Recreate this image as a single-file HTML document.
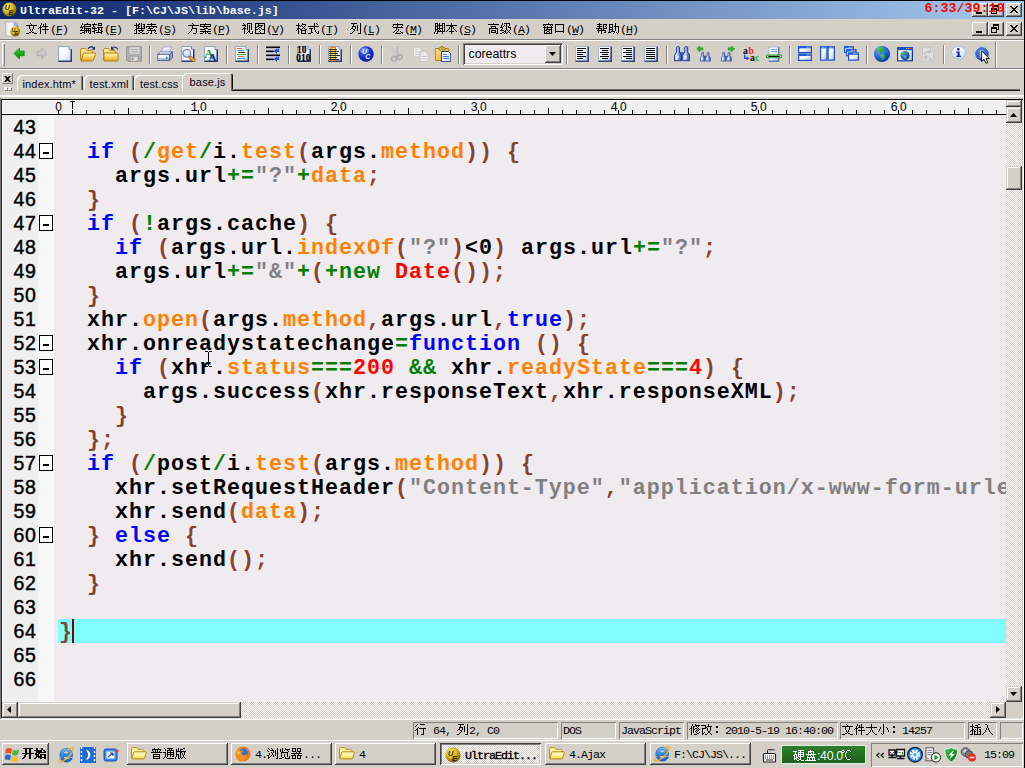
<!DOCTYPE html>
<html lang="zh"><head><meta charset="utf-8"><title>UltraEdit-32 - [F:\CJ\JS\lib\base.js]</title>
<style>
html,body{margin:0;padding:0}
body{width:1025px;height:768px;overflow:hidden;position:relative;background:#d4d0c8;font-family:"Liberation Sans",sans-serif}
div,span.t,svg.a{position:absolute;box-sizing:border-box}
.t{white-space:pre;color:#000}
.m{font-family:"Liberation Mono",monospace}
.s{font-family:"Liberation Sans",sans-serif}
.r{font-family:"Liberation Serif",serif}
.rb{background:#d4d0c8;box-shadow:inset -1px -1px 0 #404040,inset 1px 1px 0 #fff,inset -2px -2px 0 #808080,inset 2px 2px 0 #d4d0c8}
.sb{background:#d4d0c8;box-shadow:inset -1px -1px 0 #404040,inset 1px 1px 0 #d4d0c8,inset -2px -2px 0 #808080,inset 2px 2px 0 #fff}
.rb1{background:#d4d0c8;box-shadow:inset -1px -1px 0 #808080,inset 1px 1px 0 #fff}
.sk{box-shadow:inset 1px 1px 0 #808080,inset -1px -1px 0 #fff}
.chk{background-color:#fff;background-image:linear-gradient(45deg,#d4d0c8 25%,transparent 25%,transparent 75%,#d4d0c8 75%),linear-gradient(45deg,#d4d0c8 25%,transparent 25%,transparent 75%,#d4d0c8 75%);background-size:2px 2px;background-position:0 0,1px 1px}
.vs{width:1px;background:#808080;box-shadow:1px 0 0 #fff}
#code{left:59px;top:115px;width:947px;height:587px;overflow:hidden}
#code .l{left:0;height:24px;width:1400px;white-space:pre;font-family:"Liberation Mono",monospace;font-weight:bold;font-size:21.66px;letter-spacing:1px;line-height:24px;color:#000}
.K{color:#0000ff}.B{color:#88402f}.O{color:#ff8000}.G{color:#008000}.S{color:#808080}.R{color:#ff0000}
.ln{font-family:"Liberation Sans",sans-serif;font-size:19.5px;line-height:24px;letter-spacing:.6px;-webkit-text-stroke:.45px #000;left:13.6px;height:24px;white-space:pre;color:#000}
.fb{left:39px;width:14px;height:16px;border:1px solid #000;background:#fff}
.fb i{position:absolute;left:3px;top:8px;width:6px;height:2px;background:#000}
</style></head><body>
<svg width="0" height="0" style="position:absolute"><defs>
<linearGradient id="gdoc" x1="0" y1="0" x2="1" y2="1"><stop offset="0" stop-color="#fff"/><stop offset=".55" stop-color="#f4f7ff"/><stop offset="1" stop-color="#b8c8ee"/></linearGradient>
<radialGradient id="gblue" cx=".35" cy=".3" r=".8"><stop offset="0" stop-color="#5a7af8"/><stop offset=".6" stop-color="#1428c8"/><stop offset="1" stop-color="#08107a"/></radialGradient>
<radialGradient id="gglobe" cx=".35" cy=".3" r=".8"><stop offset="0" stop-color="#6ab0ff"/><stop offset=".6" stop-color="#1a58d8"/><stop offset="1" stop-color="#0a2a8a"/></radialGradient>
<radialGradient id="gue" cx=".38" cy=".32" r=".75"><stop offset="0" stop-color="#fff37c"/><stop offset=".5" stop-color="#d8b212"/><stop offset=".85" stop-color="#8a6c04"/><stop offset="1" stop-color="#4a3a00"/></radialGradient>
<linearGradient id="gbin" x1="0" y1="0" x2="1" y2="0"><stop offset="0" stop-color="#a9bff0"/><stop offset=".3" stop-color="#e6edfc"/><stop offset=".65" stop-color="#6c8bdc"/><stop offset="1" stop-color="#2c4aa8"/></linearGradient>
<linearGradient id="ginfo" x1="0" y1="0" x2="0" y2="1"><stop offset="0" stop-color="#fff"/><stop offset="1" stop-color="#b8d4f4"/></linearGradient>
<linearGradient id="gfold" x1="0" y1="0" x2="0" y2="1"><stop offset="0" stop-color="#fff0a0"/><stop offset="1" stop-color="#e8b830"/></linearGradient>
<linearGradient id="gie" x1="0" y1="0" x2="0" y2="1"><stop offset="0" stop-color="#6fc3ff"/><stop offset=".5" stop-color="#2a8bea"/><stop offset="1" stop-color="#1258c4"/></linearGradient>
<linearGradient id="gfold3" x1="0" y1="0" x2="0" y2="1"><stop offset="0" stop-color="#fffbd0"/><stop offset=".6" stop-color="#fdee8e"/><stop offset="1" stop-color="#f2cf4a"/></linearGradient>
<linearGradient id="gmdoc" x1="0" y1="0" x2="1" y2="0"><stop offset="0" stop-color="#dcdcdc"/><stop offset=".35" stop-color="#fff"/><stop offset="1" stop-color="#d0d0d0"/></linearGradient>
<linearGradient id="gshield" x1="0" y1="0" x2="1" y2="1"><stop offset="0" stop-color="#4fc85a"/><stop offset=".5" stop-color="#239a34"/><stop offset="1" stop-color="#0f6a1e"/></linearGradient>
<linearGradient id="gfold2" x1="0" y1="0" x2="0" y2="1"><stop offset="0" stop-color="#fff6b8"/><stop offset=".5" stop-color="#fbd765"/><stop offset="1" stop-color="#e2a01e"/></linearGradient>
<linearGradient id="ggreen" x1="0" y1="0" x2="0" y2="1"><stop offset="0" stop-color="#4fd84f"/><stop offset=".5" stop-color="#19a919"/><stop offset="1" stop-color="#0c8a0c"/></linearGradient>
<linearGradient id="ggray" x1="0" y1="0" x2="0" y2="1"><stop offset="0" stop-color="#dadada"/><stop offset="1" stop-color="#b2b2b2"/></linearGradient>
<linearGradient id="gprn" x1="0" y1="0" x2="1" y2="1"><stop offset="0" stop-color="#fff"/><stop offset=".6" stop-color="#f2f5fc"/><stop offset="1" stop-color="#c3cfee"/></linearGradient>
<radialGradient id="glens" cx=".4" cy=".35" r=".7"><stop offset="0" stop-color="#f2fbff"/><stop offset="1" stop-color="#a9d8fb"/></radialGradient>
<linearGradient id="gclip" x1="0" y1="0" x2="1" y2="1"><stop offset="0" stop-color="#ffe68a"/><stop offset=".6" stop-color="#efbe3a"/><stop offset="1" stop-color="#c98f12"/></linearGradient>
<linearGradient id="gsheet" x1="0" y1="0" x2="1" y2="1"><stop offset="0" stop-color="#fff"/><stop offset=".5" stop-color="#f3f6fd"/><stop offset="1" stop-color="#9fb1dc"/></linearGradient>
<linearGradient id="gwin" x1="0" y1="0" x2="1" y2="1"><stop offset="0" stop-color="#fff"/><stop offset=".5" stop-color="#f4f4f6"/><stop offset="1" stop-color="#b9bccb"/></linearGradient>
<linearGradient id="gland" x1="0" y1="0" x2="1" y2="1"><stop offset="0" stop-color="#5fe04a"/><stop offset="1" stop-color="#138a23"/></linearGradient>
<radialGradient id="ghelp" cx=".4" cy=".3" r=".8"><stop offset="0" stop-color="#5f8fe6"/><stop offset="1" stop-color="#1e4aa8"/></radialGradient>
</defs></svg>

<div style="left:0px;top:0px;width:1025px;height:1px;background:#000"></div>
<div style="left:0px;top:1px;width:1024px;height:18px;background:linear-gradient(90deg,#0a246a,#a6caf0)"></div>
<svg class="a" style="left:2.3px;top:2.3px" width="15" height="15" viewBox="0 0 16 16"><circle cx="8" cy="8" r="7.500" fill="url(#gue)"/><text x="3" y="8.500" font-family="Liberation Sans" font-style="italic" font-weight="bold" font-size="7.500" fill="#201800">U</text><text x="7" y="13.500" font-family="Liberation Sans" font-style="italic" font-weight="bold" font-size="7.500" fill="#201800">E</text></svg>
<span class="t m" style="left:20px;top:6.06px;font-size:11.66px;line-height:11.66px;color:#fff;font-weight:bold">UltraEdit-32 - [F:\CJ\JS\lib\base.js]</span>
<div class="rb" style="left:972px;top:3px;width:16px;height:14px;"><div style="left:4px;top:9px;width:6px;height:2px;background:#000"></div></div>
<div class="rb" style="left:988px;top:3px;width:16px;height:14px;"><div style="left:5px;top:2px;width:6px;height:6px;border:1px solid #000;border-top-width:2px"></div><div style="left:3px;top:5px;width:6px;height:6px;border:1px solid #000;border-top-width:2px;background:#d4d0c8"></div></div>
<div class="rb" style="left:1006px;top:3px;width:16px;height:14px;"><svg class="a" style="left:4px;top:3px" width="8" height="7" viewBox="0 0 8 7"><path d="M0 0l7 7M1 0l7 7M7 0L0 7M8 0L1 7" stroke="#000" stroke-width="1" shape-rendering="crispEdges" fill="none"/></svg></div>
<span class="t m" style="left:924.5px;top:1.78px;font-size:13.33px;line-height:13.33px;color:#ff0000;font-weight:bold;z-index:5">6:33/39:10</span>
<svg class="a" style="left:4px;top:21px" width="16" height="16" viewBox="0 0 16 16"><path d="M1.500 1h9l3.500 3.500v10.500h-12.500z" fill="url(#gmdoc)" stroke="#b4b4b4" stroke-width=".8"/><path d="M13.500 5v9.800" stroke="#6a6a6a" stroke-width="1.200"/><path d="M10.500 1v3.500h3.500z" fill="#b9b9f2" stroke="#8f8fd2" stroke-width=".7"/><g transform="translate(5.800 5.200) scale(.66)"><circle cx="8" cy="8" r="7.500" fill="url(#gue)"/><text x="3" y="8.500" font-family="Liberation Sans" font-style="italic" font-weight="bold" font-size="7.500" fill="#201800">U</text><text x="7" y="13.500" font-family="Liberation Sans" font-style="italic" font-weight="bold" font-size="7.500" fill="#201800">E</text></g></svg>
<svg class="a" role="img" aria-label="文件" style="left:26px;top:21px" width="26" height="16" shape-rendering="crispEdges"><path fill="#000" d="M4 2h1v1h-1zM5 3h1v1h-1zM0 4h11v1h-11zM3 5h1v1h-1zM7 5h1v1h-1zM3 6h1v1h-1zM7 6h1v1h-1zM3 7h1v1h-1zM7 7h1v1h-1zM4 8h1v1h-1zM6 8h1v1h-1zM4 9h1v1h-1zM6 9h1v1h-1zM5 10h1v1h-1zM3 11h2v1h-2zM6 11h2v1h-2zM0 12h3v1h-3zM8 12h3v1h-3zM15 2h1v1h-1zM19 2h1v1h-1zM15 3h1v1h-1zM17 3h1v1h-1zM19 3h1v1h-1zM14 4h1v1h-1zM17 4h1v1h-1zM19 4h1v1h-1zM14 5h1v1h-1zM16 5h6v1h-6zM13 6h3v1h-3zM19 6h1v1h-1zM12 7h1v1h-1zM14 7h1v1h-1zM19 7h1v1h-1zM14 8h1v1h-1zM16 8h7v1h-7zM14 9h1v1h-1zM19 9h1v1h-1zM14 10h1v1h-1zM19 10h1v1h-1zM14 11h1v1h-1zM19 11h1v1h-1zM14 12h1v1h-1zM19 12h1v1h-1z"/></svg>
<span class="t m" style="left:50px;top:25.06px;font-size:11.66px;line-height:11.66px;letter-spacing:-1px">(<u>F</u>)</span>
<svg class="a" role="img" aria-label="编辑" style="left:80px;top:21px" width="26" height="16" shape-rendering="crispEdges"><path fill="#000" d="M2 2h1v1h-1zM7 2h1v1h-1zM2 3h1v1h-1zM4 3h7v1h-7zM1 4h1v1h-1zM4 4h1v1h-1zM10 4h1v1h-1zM1 5h1v1h-1zM3 5h8v1h-8zM0 6h3v1h-3zM4 6h1v1h-1zM2 7h1v1h-1zM4 7h7v1h-7zM1 8h1v1h-1zM4 8h1v1h-1zM6 8h1v1h-1zM8 8h1v1h-1zM10 8h1v1h-1zM0 9h11v1h-11zM4 10h1v1h-1zM6 10h1v1h-1zM8 10h1v1h-1zM10 10h1v1h-1zM2 11h3v1h-3zM6 11h1v1h-1zM8 11h1v1h-1zM10 11h1v1h-1zM0 12h2v1h-2zM4 12h1v1h-1zM9 12h2v1h-2zM14 2h1v1h-1zM18 2h4v1h-4zM12 3h5v1h-5zM18 3h1v1h-1zM21 3h1v1h-1zM13 4h1v1h-1zM18 4h4v1h-4zM13 5h2v1h-2zM12 6h1v1h-1zM14 6h1v1h-1zM17 6h6v1h-6zM12 7h5v1h-5zM18 7h1v1h-1zM21 7h1v1h-1zM14 8h1v1h-1zM18 8h2v1h-2zM21 8h1v1h-1zM14 9h3v1h-3zM18 9h1v1h-1zM20 9h2v1h-2zM12 10h3v1h-3zM18 10h1v1h-1zM21 10h2v1h-2zM14 11h1v1h-1zM16 11h6v1h-6zM14 12h1v1h-1zM21 12h1v1h-1z"/></svg>
<span class="t m" style="left:104px;top:25.06px;font-size:11.66px;line-height:11.66px;letter-spacing:-1px">(<u>E</u>)</span>
<svg class="a" role="img" aria-label="搜索" style="left:134px;top:21px" width="26" height="16" shape-rendering="crispEdges"><path fill="#000" d="M2 2h1v1h-1zM5 2h1v1h-1zM7 2h1v1h-1zM2 3h1v1h-1zM4 3h2v1h-2zM7 3h1v1h-1zM9 3h2v1h-2zM0 4h5v1h-5zM7 4h1v1h-1zM10 4h1v1h-1zM2 5h1v1h-1zM4 5h2v1h-2zM7 5h1v1h-1zM9 5h2v1h-2zM2 6h1v1h-1zM4 6h1v1h-1zM7 6h1v1h-1zM10 6h1v1h-1zM2 7h9v1h-9zM1 8h2v1h-2zM7 8h1v1h-1zM0 9h1v1h-1zM2 9h1v1h-1zM4 9h6v1h-6zM2 10h1v1h-1zM5 10h1v1h-1zM8 10h1v1h-1zM2 11h1v1h-1zM6 11h2v1h-2zM0 12h3v1h-3zM4 12h2v1h-2zM8 12h3v1h-3zM17 2h1v1h-1zM13 3h9v1h-9zM17 4h1v1h-1zM12 5h11v1h-11zM12 6h1v1h-1zM15 6h1v1h-1zM19 6h1v1h-1zM22 6h1v1h-1zM14 7h5v1h-5zM16 8h1v1h-1zM20 8h1v1h-1zM13 9h9v1h-9zM17 10h1v1h-1zM21 10h1v1h-1zM14 11h1v1h-1zM17 11h1v1h-1zM20 11h1v1h-1zM12 12h2v1h-2zM16 12h2v1h-2zM21 12h2v1h-2z"/></svg>
<span class="t m" style="left:158px;top:25.06px;font-size:11.66px;line-height:11.66px;letter-spacing:-1px">(<u>S</u>)</span>
<svg class="a" role="img" aria-label="方案" style="left:188px;top:21px" width="26" height="16" shape-rendering="crispEdges"><path fill="#000" d="M4 2h1v1h-1zM5 3h1v1h-1zM0 4h11v1h-11zM4 5h1v1h-1zM4 6h1v1h-1zM4 7h5v1h-5zM3 8h1v1h-1zM8 8h1v1h-1zM3 9h1v1h-1zM8 9h1v1h-1zM2 10h1v1h-1zM8 10h1v1h-1zM1 11h1v1h-1zM8 11h1v1h-1zM0 12h1v1h-1zM5 12h3v1h-3zM17 2h1v1h-1zM12 3h11v1h-11zM12 4h1v1h-1zM16 4h1v1h-1zM22 4h1v1h-1zM12 5h11v1h-11zM15 6h1v1h-1zM18 6h1v1h-1zM16 7h4v1h-4zM12 8h5v1h-5zM20 8h3v1h-3zM17 9h1v1h-1zM12 10h11v1h-11zM15 11h1v1h-1zM17 11h1v1h-1zM19 11h1v1h-1zM12 12h3v1h-3zM17 12h1v1h-1zM20 12h3v1h-3z"/></svg>
<span class="t m" style="left:212px;top:25.06px;font-size:11.66px;line-height:11.66px;letter-spacing:-1px">(<u>P</u>)</span>
<svg class="a" role="img" aria-label="视图" style="left:242px;top:21px" width="26" height="16" shape-rendering="crispEdges"><path fill="#000" d="M1 2h1v1h-1zM5 2h5v1h-5zM2 3h1v1h-1zM5 3h1v1h-1zM9 3h1v1h-1zM0 4h4v1h-4zM5 4h1v1h-1zM7 4h1v1h-1zM9 4h1v1h-1zM3 5h1v1h-1zM5 5h1v1h-1zM7 5h1v1h-1zM9 5h1v1h-1zM2 6h1v1h-1zM5 6h1v1h-1zM7 6h1v1h-1zM9 6h1v1h-1zM1 7h3v1h-3zM5 7h1v1h-1zM7 7h1v1h-1zM9 7h1v1h-1zM0 8h1v1h-1zM2 8h1v1h-1zM5 8h1v1h-1zM7 8h1v1h-1zM9 8h1v1h-1zM2 9h1v1h-1zM7 9h1v1h-1zM2 10h1v1h-1zM6 10h2v1h-2zM10 10h1v1h-1zM2 11h1v1h-1zM5 11h1v1h-1zM7 11h1v1h-1zM10 11h1v1h-1zM2 12h1v1h-1zM4 12h1v1h-1zM8 12h3v1h-3zM13 2h10v1h-10zM13 3h1v1h-1zM16 3h1v1h-1zM22 3h1v1h-1zM13 4h1v1h-1zM16 4h5v1h-5zM22 4h1v1h-1zM13 5h1v1h-1zM15 5h2v1h-2zM19 5h1v1h-1zM22 5h1v1h-1zM13 6h2v1h-2zM17 6h2v1h-2zM22 6h1v1h-1zM13 7h1v1h-1zM16 7h1v1h-1zM19 7h1v1h-1zM22 7h1v1h-1zM13 8h3v1h-3zM17 8h1v1h-1zM20 8h3v1h-3zM13 9h1v1h-1zM18 9h1v1h-1zM22 9h1v1h-1zM13 10h1v1h-1zM17 10h1v1h-1zM22 10h1v1h-1zM13 11h1v1h-1zM18 11h1v1h-1zM22 11h1v1h-1zM13 12h10v1h-10z"/></svg>
<span class="t m" style="left:266px;top:25.06px;font-size:11.66px;line-height:11.66px;letter-spacing:-1px">(<u>V</u>)</span>
<svg class="a" role="img" aria-label="格式" style="left:296px;top:21px" width="26" height="16" shape-rendering="crispEdges"><path fill="#000" d="M2 2h1v1h-1zM6 2h1v1h-1zM2 3h1v1h-1zM6 3h4v1h-4zM0 4h4v1h-4zM5 4h1v1h-1zM9 4h1v1h-1zM2 5h1v1h-1zM4 5h1v1h-1zM6 5h1v1h-1zM8 5h1v1h-1zM2 6h1v1h-1zM7 6h1v1h-1zM1 7h3v1h-3zM6 7h1v1h-1zM8 7h1v1h-1zM1 8h2v1h-2zM4 8h2v1h-2zM9 8h2v1h-2zM0 9h1v1h-1zM2 9h1v1h-1zM5 9h5v1h-5zM2 10h1v1h-1zM5 10h1v1h-1zM9 10h1v1h-1zM2 11h1v1h-1zM5 11h1v1h-1zM9 11h1v1h-1zM2 12h1v1h-1zM5 12h5v1h-5zM18 2h1v1h-1zM20 2h1v1h-1zM18 3h1v1h-1zM21 3h1v1h-1zM18 4h1v1h-1zM12 5h11v1h-11zM18 6h1v1h-1zM13 7h4v1h-4zM18 7h1v1h-1zM15 8h1v1h-1zM18 8h1v1h-1zM15 9h1v1h-1zM19 9h1v1h-1zM15 10h1v1h-1zM19 10h1v1h-1zM22 10h1v1h-1zM15 11h2v1h-2zM20 11h1v1h-1zM22 11h1v1h-1zM12 12h3v1h-3zM21 12h2v1h-2z"/></svg>
<span class="t m" style="left:320px;top:25.06px;font-size:11.66px;line-height:11.66px;letter-spacing:-1px">(<u>T</u>)</span>
<svg class="a" role="img" aria-label="列" style="left:350px;top:21px" width="14" height="16" shape-rendering="crispEdges"><path fill="#000" d="M1 2h6v1h-6zM10 2h1v1h-1zM3 3h1v1h-1zM10 3h1v1h-1zM3 4h1v1h-1zM7 4h1v1h-1zM10 4h1v1h-1zM2 5h4v1h-4zM7 5h1v1h-1zM10 5h1v1h-1zM2 6h1v1h-1zM5 6h1v1h-1zM7 6h1v1h-1zM10 6h1v1h-1zM1 7h2v1h-2zM5 7h1v1h-1zM7 7h1v1h-1zM10 7h1v1h-1zM0 8h1v1h-1zM3 8h2v1h-2zM7 8h1v1h-1zM10 8h1v1h-1zM4 9h1v1h-1zM7 9h1v1h-1zM10 9h1v1h-1zM3 10h1v1h-1zM10 10h1v1h-1zM2 11h1v1h-1zM10 11h1v1h-1zM0 12h2v1h-2zM8 12h3v1h-3z"/></svg>
<span class="t m" style="left:362px;top:25.06px;font-size:11.66px;line-height:11.66px;letter-spacing:-1px">(<u>L</u>)</span>
<svg class="a" role="img" aria-label="宏" style="left:392px;top:21px" width="14" height="16" shape-rendering="crispEdges"><path fill="#000" d="M5 2h1v1h-1zM1 3h10v1h-10zM1 4h1v1h-1zM5 4h1v1h-1zM10 4h1v1h-1zM0 5h1v1h-1zM5 5h1v1h-1zM9 5h1v1h-1zM1 6h10v1h-10zM4 7h1v1h-1zM4 8h1v1h-1zM6 8h1v1h-1zM3 9h1v1h-1zM6 9h1v1h-1zM2 10h1v1h-1zM5 10h1v1h-1zM8 10h1v1h-1zM1 11h1v1h-1zM4 11h1v1h-1zM9 11h2v1h-2zM3 12h6v1h-6zM10 12h1v1h-1z"/></svg>
<span class="t m" style="left:404px;top:25.06px;font-size:11.66px;line-height:11.66px;letter-spacing:-1px">(<u>M</u>)</span>
<svg class="a" role="img" aria-label="脚本" style="left:434px;top:21px" width="26" height="16" shape-rendering="crispEdges"><path fill="#000" d="M1 2h3v1h-3zM5 2h1v1h-1zM8 2h3v1h-3zM1 3h1v1h-1zM3 3h1v1h-1zM5 3h1v1h-1zM8 3h1v1h-1zM10 3h1v1h-1zM1 4h1v1h-1zM3 4h6v1h-6zM10 4h1v1h-1zM1 5h3v1h-3zM5 5h1v1h-1zM8 5h1v1h-1zM10 5h1v1h-1zM1 6h1v1h-1zM3 6h1v1h-1zM5 6h1v1h-1zM8 6h1v1h-1zM10 6h1v1h-1zM1 7h1v1h-1zM3 7h6v1h-6zM10 7h1v1h-1zM1 8h3v1h-3zM5 8h1v1h-1zM8 8h1v1h-1zM10 8h1v1h-1zM1 9h1v1h-1zM3 9h2v1h-2zM6 9h1v1h-1zM8 9h1v1h-1zM10 9h1v1h-1zM1 10h1v1h-1zM3 10h8v1h-8zM0 11h1v1h-1zM3 11h1v1h-1zM8 11h1v1h-1zM0 12h1v1h-1zM2 12h2v1h-2zM8 12h1v1h-1zM17 2h1v1h-1zM17 3h1v1h-1zM12 4h11v1h-11zM16 5h3v1h-3zM15 6h1v1h-1zM17 6h1v1h-1zM19 6h1v1h-1zM15 7h1v1h-1zM17 7h1v1h-1zM19 7h1v1h-1zM14 8h1v1h-1zM17 8h1v1h-1zM20 8h1v1h-1zM13 9h1v1h-1zM17 9h1v1h-1zM21 9h1v1h-1zM12 10h1v1h-1zM15 10h5v1h-5zM22 10h1v1h-1zM17 11h1v1h-1zM17 12h1v1h-1z"/></svg>
<span class="t m" style="left:458px;top:25.06px;font-size:11.66px;line-height:11.66px;letter-spacing:-1px">(<u>S</u>)</span>
<svg class="a" role="img" aria-label="高级" style="left:488px;top:21px" width="26" height="16" shape-rendering="crispEdges"><path fill="#000" d="M5 2h1v1h-1zM0 3h11v1h-11zM3 5h5v1h-5zM3 6h1v1h-1zM7 6h1v1h-1zM1 7h9v1h-9zM1 8h1v1h-1zM9 8h1v1h-1zM1 9h1v1h-1zM3 9h5v1h-5zM9 9h1v1h-1zM1 10h1v1h-1zM3 10h1v1h-1zM7 10h1v1h-1zM9 10h1v1h-1zM1 11h1v1h-1zM3 11h5v1h-5zM9 11h1v1h-1zM1 12h1v1h-1zM8 12h2v1h-2zM14 2h1v1h-1zM16 2h6v1h-6zM14 3h1v1h-1zM18 3h1v1h-1zM21 3h1v1h-1zM13 4h1v1h-1zM16 4h1v1h-1zM18 4h1v1h-1zM21 4h1v1h-1zM13 5h1v1h-1zM15 5h1v1h-1zM18 5h1v1h-1zM20 5h1v1h-1zM12 6h3v1h-3zM18 6h1v1h-1zM20 6h3v1h-3zM14 7h1v1h-1zM18 7h1v1h-1zM22 7h1v1h-1zM13 8h1v1h-1zM18 8h1v1h-1zM22 8h1v1h-1zM12 9h4v1h-4zM17 9h1v1h-1zM19 9h1v1h-1zM21 9h1v1h-1zM16 10h2v1h-2zM20 10h1v1h-1zM14 11h2v1h-2zM17 11h1v1h-1zM19 11h1v1h-1zM21 11h1v1h-1zM12 12h2v1h-2zM16 12h1v1h-1zM18 12h1v1h-1zM22 12h1v1h-1z"/></svg>
<span class="t m" style="left:512px;top:25.06px;font-size:11.66px;line-height:11.66px;letter-spacing:-1px">(<u>A</u>)</span>
<svg class="a" role="img" aria-label="窗口" style="left:542px;top:21px" width="26" height="16" shape-rendering="crispEdges"><path fill="#000" d="M6 2h1v1h-1zM1 3h10v1h-10zM1 4h1v1h-1zM3 4h1v1h-1zM8 4h1v1h-1zM10 4h1v1h-1zM2 5h1v1h-1zM5 5h1v1h-1zM9 5h1v1h-1zM1 6h10v1h-10zM2 7h1v1h-1zM5 7h1v1h-1zM9 7h1v1h-1zM2 8h1v1h-1zM4 8h6v1h-6zM2 9h3v1h-3zM7 9h1v1h-1zM9 9h1v1h-1zM2 10h1v1h-1zM5 10h2v1h-2zM9 10h1v1h-1zM2 11h1v1h-1zM4 11h1v1h-1zM7 11h1v1h-1zM9 11h1v1h-1zM2 12h8v1h-8zM13 3h9v1h-9zM13 4h1v1h-1zM21 4h1v1h-1zM13 5h1v1h-1zM21 5h1v1h-1zM13 6h1v1h-1zM21 6h1v1h-1zM13 7h1v1h-1zM21 7h1v1h-1zM13 8h1v1h-1zM21 8h1v1h-1zM13 9h1v1h-1zM21 9h1v1h-1zM13 10h9v1h-9zM13 11h1v1h-1zM21 11h1v1h-1z"/></svg>
<span class="t m" style="left:566px;top:25.06px;font-size:11.66px;line-height:11.66px;letter-spacing:-1px">(<u>W</u>)</span>
<svg class="a" role="img" aria-label="帮助" style="left:596px;top:21px" width="26" height="16" shape-rendering="crispEdges"><path fill="#000" d="M3 2h1v1h-1zM1 3h5v1h-5zM7 3h4v1h-4zM3 4h1v1h-1zM7 4h1v1h-1zM10 4h1v1h-1zM1 5h5v1h-5zM7 5h1v1h-1zM9 5h1v1h-1zM3 6h1v1h-1zM7 6h1v1h-1zM10 6h1v1h-1zM0 7h6v1h-6zM7 7h4v1h-4zM2 8h1v1h-1zM5 8h1v1h-1zM7 8h1v1h-1zM1 9h9v1h-9zM2 10h1v1h-1zM5 10h1v1h-1zM9 10h1v1h-1zM2 11h1v1h-1zM5 11h1v1h-1zM8 11h2v1h-2zM5 12h1v1h-1zM19 2h1v1h-1zM13 3h4v1h-4zM19 3h1v1h-1zM13 4h1v1h-1zM16 4h1v1h-1zM19 4h1v1h-1zM13 5h1v1h-1zM16 5h1v1h-1zM18 5h5v1h-5zM13 6h4v1h-4zM19 6h1v1h-1zM22 6h1v1h-1zM13 7h1v1h-1zM16 7h1v1h-1zM19 7h1v1h-1zM22 7h1v1h-1zM13 8h4v1h-4zM19 8h1v1h-1zM22 8h1v1h-1zM13 9h1v1h-1zM16 9h1v1h-1zM19 9h1v1h-1zM22 9h1v1h-1zM13 10h1v1h-1zM15 10h4v1h-4zM22 10h1v1h-1zM12 11h3v1h-3zM18 11h1v1h-1zM20 11h1v1h-1zM22 11h1v1h-1zM17 12h1v1h-1zM21 12h1v1h-1z"/></svg>
<span class="t m" style="left:620px;top:25.06px;font-size:11.66px;line-height:11.66px;letter-spacing:-1px">(<u>H</u>)</span>
<div class="rb" style="left:972px;top:22px;width:16px;height:14px;"><div style="left:4px;top:9px;width:6px;height:2px;background:#000"></div></div>
<div class="rb" style="left:988px;top:22px;width:16px;height:14px;"><div style="left:5px;top:2px;width:6px;height:6px;border:1px solid #000;border-top-width:2px"></div><div style="left:3px;top:5px;width:6px;height:6px;border:1px solid #000;border-top-width:2px;background:#d4d0c8"></div></div>
<div class="rb" style="left:1006px;top:22px;width:16px;height:14px;"><svg class="a" style="left:4px;top:3px" width="8" height="7" viewBox="0 0 8 7"><path d="M0 0l7 7M1 0l7 7M7 0L0 7M8 0L1 7" stroke="#000" stroke-width="1" shape-rendering="crispEdges" fill="none"/></svg></div>
<div style="left:0px;top:39px;width:1024px;height:1px;background:#808080"></div>
<div style="left:0px;top:40px;width:1024px;height:1px;background:#fff"></div>
<div style="left:2px;top:43px;width:3px;height:23px;background:#d4d0c8;box-shadow:inset 1px 1px 0 #fff,inset -1px -1px 0 #808080"></div>
<svg class="a" style="left:11px;top:46px" width="16" height="16" viewBox="0 0 16 16"><path d="M3 7.500L8.500 2v3.100h4.700v4.700H8.500V13z" fill="url(#ggreen)" stroke="#0b7d0b" stroke-width=".7" stroke-linejoin="round"/></svg>
<svg class="a" style="left:34px;top:46px" width="16" height="16" viewBox="0 0 16 16"><path d="M12.700 7.500L7.700 2v3.100H3.100v4.700h4.600V13z" fill="url(#ggray)" stroke="#a4a4a4" stroke-width=".7" stroke-linejoin="round"/></svg>
<svg class="a" style="left:57px;top:46px" width="16" height="16" viewBox="0 0 16 16"><path d="M1 0H12L15 3V16H1z" fill="url(#gdoc)"/><path d="M1.5 16V0.5H12L14.5 3" fill="none" stroke="#93a3cf" stroke-width="1"/><path d="M14.25 3V15.25H1.5" fill="none" stroke="#2c3c70" stroke-width="1.5"/><path d="M12 0.4v3h2.6" fill="#eef2fc" stroke="#5b6da6" stroke-width=".8"/></svg>
<svg class="a" style="left:80px;top:46px" width="16" height="16" viewBox="0 0 16 16"><path d="M.500 14V4q0-1.500 1.500-1.500h3q1 0 1.500 1l.5 1H11q1.500 0 1.500 1.500V14z" fill="url(#gfold)" stroke="#c08a1c"/><path d="M1 15L3.300 7.800q.3-.8 1.200-.8H15q1 0 .6 1L13.300 14.400q-.2.600-1 .6z" fill="url(#gfold2)" stroke="#b87c14"/><path d="M8 3C9.500.500 12 .300 13.500 1.800" fill="none" stroke="#1a2a5a" stroke-width="1.100"/><path d="M15 .2v3.600h-3.600z" fill="#1a2a5a"/></svg>
<svg class="a" style="left:103px;top:46px" width="16" height="16" viewBox="0 0 16 16"><path d="M.500 14V4q0-1.500 1.500-1.500h3q1 0 1.500 1l.5 1H11q1.500 0 1.500 1.500V14z" fill="url(#gfold)" stroke="#c08a1c"/><path d="M1 14.500V7.800q0-.8.800-.8h12.400q.8 0 .8.800v6.700q0 .5-.5.5h-13q-.5 0-.5-.5z" fill="url(#gfold2)" stroke="#b87c14"/><path d="M15 3.500C13.500 1 11.500 .500 9.500 1.500" fill="none" stroke="#1a2a5a" stroke-width="1.100"/><path d="M8 .2v3.600h3.600z" fill="#1a2a5a"/></svg>
<svg class="a" style="left:126px;top:46px" width="16" height="16" viewBox="0 0 16 16"><path d="M1 .500h14q.5 0 .5.500v14q0 .5-.5.500H2L.500 14V1q0-.5.500-.5z" fill="#ababab" stroke="#9a9a9a"/><rect x="3.500" y="1" width="10" height="7" fill="#d9d9d9" stroke="#b4b4b4" stroke-width=".6"/><path d="M5 3.500h7M5 5.800h7" stroke="#a8a8a8" stroke-width="1.100"/><rect x="4.500" y="10.500" width="7.500" height="4.500" fill="#dedede" stroke="#9c9c9c" stroke-width=".6"/><rect x="5.800" y="11.800" width="1.600" height="1.800" fill="#7c7c7c"/></svg>
<svg class="a" style="left:157px;top:46px" width="16" height="16" viewBox="0 0 16 16"><path d="M3.500 6.500L6.300 1h8.300l-2.600 5.800z" fill="#fff" stroke="#9f9fd6" stroke-width=".9"/><path d="M6 3.300h6.500M5 5h6.500" stroke="#c9cdea" stroke-width=".9"/><path d="M.800 8.300L3.500 5.800h11.800l-2.800 2.500z" fill="#e7ecf8" stroke="#5b6da6" stroke-width=".8"/><path d="M.700 8.300h12v6.200h-12z" fill="url(#gprn)" stroke="#44568f" stroke-width=".9"/><path d="M12.700 8.300l2.800-2.500v5.700l-2.800 3z" fill="#9aaad0" stroke="#44568f" stroke-width=".9"/><path d="M1.500 13h10.500" stroke="#6f81b4" stroke-width="1"/><rect x="9.200" y="10.700" width="1.300" height="2" fill="#1c8a2c"/></svg>
<svg class="a" style="left:180px;top:46px" width="16" height="16" viewBox="0 0 16 16"><path d="M1 0H11.5L14.5 3V16H1z" fill="url(#gdoc)"/><path d="M1.5 16V0.5H11.5L14 3" fill="none" stroke="#93a3cf" stroke-width="1"/><path d="M13.75 3V15.25H1.5" fill="none" stroke="#2c3c70" stroke-width="1.5"/><path d="M11.5 0.4v3h2.6" fill="#eef2fc" stroke="#5b6da6" stroke-width=".8"/><circle cx="6.800" cy="7.300" r="3.900" fill="url(#glens)" stroke="#8784b8" stroke-width="1.300"/><path d="M10.300 11.200l3.600 3.400" stroke="#9a5a14" stroke-width="3.400" stroke-linecap="round"/><path d="M10.300 11.200l3.600 3.400" stroke="#e7a446" stroke-width="2" stroke-linecap="round"/></svg>
<svg class="a" style="left:203px;top:46px" width="16" height="16" viewBox="0 0 16 16"><path d="M1 0H12L15 3V16H1z" fill="url(#gdoc)"/><path d="M1.5 16V0.5H12L14.5 3" fill="none" stroke="#93a3cf" stroke-width="1"/><path d="M14.25 3V15.25H1.5" fill="none" stroke="#2c3c70" stroke-width="1.5"/><path d="M12 0.4v3h2.6" fill="#eef2fc" stroke="#5b6da6" stroke-width=".8"/><text x="1.300" y="11.500" font-family="Liberation Serif" font-weight="bold" font-size="12.500" fill="#16981f">A</text><text x="5.600" y="15" font-family="Liberation Serif" font-weight="bold" font-size="11" fill="#14249c">A</text></svg>
<svg class="a" style="left:234px;top:46px" width="16" height="16" viewBox="0 0 16 16"><path d="M1 0H12L15 3V16H1z" fill="url(#gdoc)"/><path d="M1.5 16V0.5H12L14.5 3" fill="none" stroke="#93a3cf" stroke-width="1"/><path d="M14.25 3V15.25H1.5" fill="none" stroke="#2c3c70" stroke-width="1.5"/><path d="M12 0.4v3h2.6" fill="#eef2fc" stroke="#5b6da6" stroke-width=".8"/><path d="M3 2.500h5M4 10.500h6" stroke="#ef6a3c" stroke-width="1"/><path d="M3 4.500h7M3 12.500h8" stroke="#1f9af0" stroke-width="1"/><path d="M4 6.500h7" stroke="#3a3a3a" stroke-width="1"/><path d="M3 8.500h9" stroke="#46c03a" stroke-width="1"/></svg>
<svg class="a" style="left:265px;top:46px" width="16" height="16" viewBox="0 0 16 16"><path d="M1 2.300h14M1 10.300h14M1 6.300h8M1 14.300h8" stroke="#9fb0d0" stroke-width="1"/><path d="M1 1.200h14M1 5.200h8M1 9.200h14M1 13.200h8" stroke="#0a0a0a" stroke-width="1.500"/><path d="M13.300 2.8v2.300h-2.600" fill="none" stroke="#1b4bd8" stroke-width="1.700"/><path d="M8.700 5.2l3.300-2.600v5.200z" fill="#1b4bd8"/><path d="M13.300 10.8v2.300h-2.600" fill="none" stroke="#1b4bd8" stroke-width="1.700"/><path d="M8.700 13.2l3.300-2.600v5.200z" fill="#1b4bd8"/></svg>
<svg class="a" style="left:296px;top:46px" width="16" height="16" viewBox="0 0 16 16"><path d="M1 0H12L15 3V16H1z" fill="url(#gdoc)"/><path d="M1.5 16V0.5H12L14.5 3" fill="none" stroke="#93a3cf" stroke-width="1"/><path d="M14.25 3V15.25H1.5" fill="none" stroke="#2c3c70" stroke-width="1.5"/><path d="M12 0.4v3h2.6" fill="#eef2fc" stroke="#5b6da6" stroke-width=".8"/><text x="1" y="7.400" font-family="Liberation Serif" font-weight="bold" font-size="9.400" fill="#000" stroke="#000" stroke-width=".25">10</text><text x=".300" y="14.700" font-family="Liberation Serif" font-weight="bold" font-size="9.400" fill="#000" stroke="#000" stroke-width=".25">010</text></svg>
<svg class="a" style="left:327px;top:46px" width="16" height="16" viewBox="0 0 16 16"><path d="M1 0H12L15 3V16H1z" fill="url(#gdoc)"/><path d="M1.5 16V0.5H12L14.5 3" fill="none" stroke="#93a3cf" stroke-width="1"/><path d="M14.25 3V15.25H1.5" fill="none" stroke="#2c3c70" stroke-width="1.5"/><path d="M12 0.4v3h2.6" fill="#eef2fc" stroke="#5b6da6" stroke-width=".8"/><rect x="3.500" y="1.500" width="5" height="13" fill="#f6e45c" stroke="#f2791a" stroke-width="1.200"/><path d="M2 3.500h8M2 5.500h10M2 7.500h9M2 9.500h11M2 11.500h8M2 13.500h10" stroke="#1a1a1a" stroke-width=".9"/></svg>
<svg class="a" style="left:358px;top:46px" width="16" height="16" viewBox="0 0 16 16"><circle cx="8" cy="8" r="7.700" fill="url(#gblue)"/><ellipse cx="6.500" cy="4.300" rx="4.500" ry="2.600" fill="#9fb6ff" opacity=".45"/><text x="4" y="7.800" font-family="Liberation Sans" font-style="italic" font-weight="bold" font-size="7" fill="#e4eaff">U</text><text x="7.300" y="12.800" font-family="Liberation Sans" font-style="italic" font-weight="bold" font-size="7" fill="#e4eaff">C</text></svg>
<svg class="a" style="left:389px;top:46px" width="16" height="16" viewBox="0 0 16 16"><path d="M3 2l5.800 8.500M8.500 .800l-.3 9.700" stroke="#b4b4b4" stroke-width="1.700" fill="none" stroke-linecap="round"/><path d="M3.300 2.300l4.600 6.700" stroke="#ededed" stroke-width=".7"/><ellipse cx="5" cy="12.800" rx="2.300" ry="2.600" fill="none" stroke="#ababab" stroke-width="1.500"/><ellipse cx="10.700" cy="11" rx="2.500" ry="2.200" fill="none" stroke="#ababab" stroke-width="1.500" transform="rotate(-30 10.700 11)"/></svg>
<svg class="a" style="left:412px;top:46px" width="16" height="16" viewBox="0 0 16 16"><path d="M1.5 1h5.500l2.500 2.500v7.500h-8z" fill="#ececec" stroke="#c3c3c3" stroke-width=".9"/><path d="M3 3.5h2M3 6h5M3 8.5h5" stroke="#c9c9c9" stroke-width="1"/><path d="M8 5.5h5.500l2.500 2.500v7.500h-8z" fill="#ececec" stroke="#c3c3c3" stroke-width=".9"/><path d="M9.5 8h2M9.5 10.5h5M9.5 13h5" stroke="#c9c9c9" stroke-width="1"/></svg>
<svg class="a" style="left:435px;top:46px" width="16" height="16" viewBox="0 0 16 16"><path d="M1 2.500h12q.6 0 .6.600V14q0 .6-.6.600H1q-.6 0-.6-.600V3.100q0-.6.600-.6z" fill="url(#gclip)" stroke="#a9760d" stroke-width=".9"/><path d="M4 3.800V2.300q0-.5.500-.5h.900q0-1.500 1.600-1.500t1.600 1.500h.9q.5 0 .5.500v1.500z" fill="#e8cf72" stroke="#8a6410" stroke-width=".8"/><circle cx="7" cy="1.900" r=".7" fill="#8a6410"/><path d="M6.500 5.500h7l2.300 2.300V15.700H6.500z" fill="url(#gdoc)" stroke="#27376f" stroke-width="1"/><path d="M8 8.500h4M8 10.500h6M8 12.500h6" stroke="#2f8be6" stroke-width="1.200"/></svg>
<svg class="a" style="left:575px;top:46px" width="16" height="16" viewBox="0 0 16 16"><rect x="0" y="0" width="14" height="16" fill="url(#gsheet)"/><path d="M.5 15.500V.500H13" fill="none" stroke="#a9b7d8"/><path d="M13.200 .5v14.700H.500" fill="none" stroke="#34457c" stroke-width="1.600"/><path d="M2 2.5h9M2 4.5h6M2 6.5h9M2 8.5h6M2 10.5h9M2 12.5h6" stroke="#000" stroke-width="1" shape-rendering="crispEdges"/></svg>
<svg class="a" style="left:598px;top:46px" width="16" height="16" viewBox="0 0 16 16"><rect x="0" y="0" width="14" height="16" fill="url(#gsheet)"/><path d="M.5 15.500V.500H13" fill="none" stroke="#a9b7d8"/><path d="M13.200 .5v14.700H.500" fill="none" stroke="#34457c" stroke-width="1.600"/><path d="M2 2.5h9M3.5 4.5h6M2 6.5h9M3.5 8.5h6M2 10.5h9M3.5 12.5h6" stroke="#000" stroke-width="1" shape-rendering="crispEdges"/></svg>
<svg class="a" style="left:621px;top:46px" width="16" height="16" viewBox="0 0 16 16"><rect x="0" y="0" width="14" height="16" fill="url(#gsheet)"/><path d="M.5 15.500V.500H13" fill="none" stroke="#a9b7d8"/><path d="M13.200 .5v14.700H.500" fill="none" stroke="#34457c" stroke-width="1.600"/><path d="M2 2.5h9M5 4.5h6M2 6.5h9M5 8.5h6M2 10.5h9M5 12.5h6" stroke="#000" stroke-width="1" shape-rendering="crispEdges"/></svg>
<svg class="a" style="left:644px;top:46px" width="16" height="16" viewBox="0 0 16 16"><rect x="0" y="0" width="14" height="16" fill="url(#gsheet)"/><path d="M.5 15.500V.500H13" fill="none" stroke="#a9b7d8"/><path d="M13.200 .5v14.700H.500" fill="none" stroke="#34457c" stroke-width="1.600"/><path d="M2 2.5h9M2 4.5h9M2 6.5h9M2 8.5h9M2 10.5h9M2 12.5h9" stroke="#000" stroke-width="1" shape-rendering="crispEdges"/></svg>
<svg class="a" style="left:674px;top:46px" width="16" height="16" viewBox="0 0 16 16"><rect x="6" y="6" width="4.500" height="3.500" fill="#4a66b4"/><path d="M0.5 14.700V9.300l2-3.200V1.500q0-.8.800-.8h1.400q.8 0 .8.800v4.600l2 3.200v5.400z" fill="url(#gbin)" stroke="#1f3a8c" stroke-width="1"/><path d="M1.8 11h3" stroke="#e9eefb" stroke-width="1.500"/><path d="M8.7 14.700V9.300l2-3.200V1.500q0-.8.800-.8h1.400q.8 0 .8.800v4.600l2 3.200v5.400z" fill="url(#gbin)" stroke="#1f3a8c" stroke-width="1"/><path d="M10 11h3" stroke="#e9eefb" stroke-width="1.500"/></svg>
<svg class="a" style="left:697px;top:46px" width="16" height="16" viewBox="0 0 16 16"><g transform="translate(3 6) scale(.66 .62)"><rect x="6" y="6" width="4.500" height="3.500" fill="#4a66b4"/><path d="M0.5 14.700V9.300l2-3.200V1.500q0-.8.800-.8h1.400q.8 0 .8.800v4.600l2 3.200v5.400z" fill="url(#gbin)" stroke="#1f3a8c" stroke-width="1"/><path d="M1.8 11h3" stroke="#e9eefb" stroke-width="1.500"/><path d="M8.7 14.700V9.300l2-3.200V1.500q0-.8.800-.8h1.400q.8 0 .8.800v4.600l2 3.200v5.400z" fill="url(#gbin)" stroke="#1f3a8c" stroke-width="1"/><path d="M10 11h3" stroke="#e9eefb" stroke-width="1.500"/></g><path d="M-0.7 2.900L2.7 .100v1.700h3.2v2.200h-3.2v1.700z" fill="#2fc02f" stroke="#0c8a0c" stroke-width=".6" stroke-linejoin="round"/></svg>
<svg class="a" style="left:720px;top:46px" width="16" height="16" viewBox="0 0 16 16"><g transform="translate(1 6) scale(.66 .62)"><rect x="6" y="6" width="4.500" height="3.500" fill="#4a66b4"/><path d="M0.5 14.700V9.300l2-3.200V1.500q0-.8.800-.8h1.400q.8 0 .8.800v4.600l2 3.200v5.400z" fill="url(#gbin)" stroke="#1f3a8c" stroke-width="1"/><path d="M1.8 11h3" stroke="#e9eefb" stroke-width="1.500"/><path d="M8.7 14.700V9.300l2-3.200V1.500q0-.8.800-.8h1.400q.8 0 .8.800v4.600l2 3.200v5.400z" fill="url(#gbin)" stroke="#1f3a8c" stroke-width="1"/><path d="M10 11h3" stroke="#e9eefb" stroke-width="1.500"/></g><path d="M14.7 2.900L11.3 .100v1.700h-3.2v2.200h3.2v1.700z" fill="#2fc02f" stroke="#0c8a0c" stroke-width=".6" stroke-linejoin="round"/></svg>
<svg class="a" style="left:743px;top:46px" width="16" height="16" viewBox="0 0 16 16"><text x="0" y="7.500" font-family="Liberation Serif" font-weight="bold" font-size="9.500" fill="#000">a</text><text x="5.500" y="7.500" font-family="Liberation Serif" font-weight="bold" font-size="9.500" fill="#ef1c1c">b</text><text x="7" y="15" font-family="Liberation Serif" font-weight="bold" font-size="9.500" fill="#000">a</text><text x="12" y="15" font-family="Liberation Serif" font-weight="bold" font-size="9.500" fill="#23b023">c</text><path d="M1.700 8.500v3.800h2.600" stroke="#1c38d8" stroke-width="1.200" fill="none"/><path d="M6.400 12.300L3.700 10.400v3.800z" fill="#1c38d8"/></svg>
<svg class="a" style="left:766px;top:46px" width="16" height="16" viewBox="0 0 16 16"><path d="M3 1h10v14.500H3z" fill="url(#gsheet)" stroke="#9aaad4" stroke-width=".8"/><path d="M12.700 1v14.200H3" fill="none" stroke="#5a6ca6" stroke-width="1.200"/><path d="M5 3.500h6M5 5.500h6" stroke="#6f95ea" stroke-width="1"/><rect x=".400" y="9" width="15.200" height="2.800" rx="1" fill="#fff" stroke="#1d9c1d" stroke-width="1.100"/><path d="M2.300 10.400h11.400" stroke="#111" stroke-width="1.300"/></svg>
<svg class="a" style="left:797px;top:46px" width="16" height="16" viewBox="0 0 16 16"><rect x="1.6" y="0.6" width="12.8" height="6" fill="url(#gwin)" stroke="#1c55c4" stroke-width="1.200"/><rect x="1" y="0" width="14" height="2.300" fill="#1c5fd6"/><rect x="12.4" y="0.6" width="1.400" height="1.100" fill="#ff7a22"/><rect x="9.4" y="0.7" width="2.400" height=".9" fill="#9cc0f6"/><rect x="1.6" y="8.3" width="12.8" height="6.1" fill="url(#gwin)" stroke="#1c55c4" stroke-width="1.200"/><rect x="1" y="7.7" width="14" height="2.300" fill="#1c5fd6"/><rect x="12.4" y="8.3" width="1.400" height="1.100" fill="#ff7a22"/><rect x="9.4" y="8.4" width="2.400" height=".9" fill="#9cc0f6"/></svg>
<svg class="a" style="left:820px;top:46px" width="16" height="16" viewBox="0 0 16 16"><rect x="0.6" y="0.6" width="6.3" height="13.5" fill="url(#gwin)" stroke="#1c55c4" stroke-width="1.200"/><rect x="0" y="0" width="7.5" height="2.300" fill="#1c5fd6"/><rect x="4.9" y="0.6" width="1.400" height="1.100" fill="#ff7a22"/><rect x="1.9" y="0.7" width="2.400" height=".9" fill="#9cc0f6"/><rect x="8.1" y="0.6" width="6.3" height="13.5" fill="url(#gwin)" stroke="#1c55c4" stroke-width="1.200"/><rect x="7.5" y="0" width="7.5" height="2.300" fill="#1c5fd6"/><rect x="12.4" y="0.6" width="1.400" height="1.100" fill="#ff7a22"/><rect x="9.4" y="0.7" width="2.400" height=".9" fill="#9cc0f6"/></svg>
<svg class="a" style="left:843.5px;top:46px" width="16" height="16" viewBox="0 0 16 16"><rect x="0.6" y="0.6" width="8.8" height="5.8" fill="url(#gwin)" stroke="#1c55c4" stroke-width="1.200"/><rect x="0" y="0" width="10" height="2.300" fill="#1c5fd6"/><rect x="7.4" y="0.6" width="1.400" height="1.100" fill="#ff7a22"/><rect x="4.4" y="0.7" width="2.400" height=".9" fill="#9cc0f6"/><rect x="2.6" y="3.9" width="9.3" height="5.8" fill="url(#gwin)" stroke="#1c55c4" stroke-width="1.200"/><rect x="2" y="3.3" width="10.5" height="2.300" fill="#1c5fd6"/><rect x="9.9" y="3.9" width="1.400" height="1.100" fill="#ff7a22"/><rect x="6.9" y="4" width="2.400" height=".9" fill="#9cc0f6"/><rect x="4.6" y="7.1" width="9.8" height="7" fill="url(#gwin)" stroke="#1c55c4" stroke-width="1.200"/><rect x="4" y="6.5" width="11" height="2.300" fill="#1c5fd6"/><rect x="12.4" y="7.1" width="1.400" height="1.100" fill="#ff7a22"/><rect x="9.4" y="7.2" width="2.400" height=".9" fill="#9cc0f6"/></svg>
<svg class="a" style="left:874px;top:46px" width="16" height="16" viewBox="0 0 16 16"><circle cx="8" cy="8" r="8" fill="url(#gglobe)"/><path d="M3.500 2.500c1.500-1.300 3.800-1.800 5.300-1 .8.700-.2 1.500.5 2.300.8.600.5 1.700-.6 2.200-1 .6-.8 1.600-1.900 1.900-1.300 0-1.200-1.300-2.300-1.700C3.300 5.600 2.200 4.500 3.500 2.500z" fill="url(#gland)"/><path d="M6.800 8.800c1.300-.6 3.300-.3 4.200.8.500 1.200-.6 2.400-1.500 3.700-.6 1-1.500 1.700-1.900.8-.3-1.200.2-2-.6-3-.6-.8-.9-1.600-.2-2.300z" fill="url(#gland)"/><path d="M12.500 3.500c1 .5 1.800 1.700 2 2.800-.8-.2-1.600-.8-2-1.600z" fill="#2aa63a" opacity=".8"/></svg>
<svg class="a" style="left:897px;top:46px" width="16" height="16" viewBox="0 0 16 16"><rect x=".600" y="1.600" width="14.800" height="13.200" fill="url(#gwin)" stroke="#153a9c" stroke-width="1.200"/><rect x="0" y="1" width="16" height="3.200" fill="#1c4fc0"/><rect x="9" y="2" width="1.500" height="1" fill="#9cc0f6"/><rect x="11" y="2" width="1.500" height="1" fill="#ff9a2a"/><rect x="13" y="2" width="1.500" height="1" fill="#f03a24"/><g transform="translate(3.400 5) scale(.575)"><circle cx="8" cy="8" r="8" fill="url(#gglobe)"/><path d="M3.500 2.500c1.500-1.300 3.800-1.800 5.300-1 .8.700-.2 1.500.5 2.300.8.600.5 1.700-.6 2.200-1 .6-.8 1.600-1.900 1.900-1.300 0-1.200-1.300-2.300-1.700C3.300 5.600 2.200 4.500 3.500 2.500z" fill="url(#gland)"/><path d="M6.800 8.800c1.300-.6 3.300-.3 4.200.8.500 1.200-.6 2.400-1.500 3.700-.6 1-1.500 1.700-1.900.8-.3-1.200.2-2-.6-3-.6-.8-.9-1.600-.2-2.300z" fill="url(#gland)"/><path d="M12.500 3.500c1 .5 1.800 1.700 2 2.800-.8-.2-1.600-.8-2-1.600z" fill="#2aa63a" opacity=".8"/></g></svg>
<svg class="a" style="left:920px;top:46px" width="16" height="16" viewBox="0 0 16 16"><path d="M2.500 1.500h8l3 3v10.500h-11z" fill="#dedede" stroke="#c6c6c6"/><path d="M10.500 1.500v3h3" fill="#ececec" stroke="#c6c6c6"/><path d="M4 8.500c1.500-3 4-3 6-2.500M9 4.500l1.500 1.500L9 7.500" fill="none" stroke="#bdbdbd" stroke-width="1.100"/><path d="M5 10v3.500M5 10h2v1.500H5M7 13.500l-1-2M9 13.500h2.500M9 10.500l2.500 3" stroke="#bdbdbd" stroke-width="1" fill="none"/></svg>
<svg class="a" style="left:951px;top:46px" width="16" height="16" viewBox="0 0 16 16"><path d="M7.500 .500c4 0 7 2.700 7 6 0 2.600-1.900 4.800-4.600 5.600L9.300 15.300 7 12.500C3.300 12.300.500 9.700.500 6.500c0-3.300 3-6 7-6z" fill="url(#ginfo)" stroke="#9dbbe6" stroke-width=".9"/><circle cx="7.300" cy="3.300" r="1.250" fill="#1717b4"/><path d="M5.300 5.500h3.300v4.300h1.200v1.300H5.300V9.800h1.300V6.800H5.300z" fill="#1717b4"/></svg>
<svg class="a" style="left:974px;top:46px" width="16" height="16" viewBox="0 0 16 16"><circle cx="8" cy="8" r="7.600" fill="#dbe8fb" stroke="#b5cdf0" stroke-width=".6"/><circle cx="8" cy="8" r="6.400" fill="url(#ghelp)" stroke="#2855b4" stroke-width=".8"/><path d="M6.300 4.300h2.500v7.300H6.300z" fill="#e9f0ff"/></svg>
<div class="vs" style="left:149px;top:45px;width:1px;height:19px;"></div>
<div class="vs" style="left:226px;top:45px;width:1px;height:19px;"></div>
<div class="vs" style="left:257px;top:45px;width:1px;height:19px;"></div>
<div class="vs" style="left:288px;top:45px;width:1px;height:19px;"></div>
<div class="vs" style="left:319px;top:45px;width:1px;height:19px;"></div>
<div class="vs" style="left:350px;top:45px;width:1px;height:19px;"></div>
<div class="vs" style="left:381px;top:45px;width:1px;height:19px;"></div>
<div class="vs" style="left:458px;top:45px;width:1px;height:19px;"></div>
<div class="vs" style="left:566px;top:45px;width:1px;height:19px;"></div>
<div class="vs" style="left:666px;top:45px;width:1px;height:19px;"></div>
<div class="vs" style="left:789px;top:45px;width:1px;height:19px;"></div>
<div class="vs" style="left:866px;top:45px;width:1px;height:19px;"></div>
<div class="vs" style="left:943px;top:45px;width:1px;height:19px;"></div>
<div class="vs" style="left:995px;top:41px;width:1px;height:27px;"></div>
<svg class="a" style="left:981px;top:49.5px" width="16" height="16" viewBox="0 0 16 16"><path d="M.600 .800v10.700l2.500-2.300 1.900 4.100 1.800-.8-1.800-3.900h3.300z" fill="#fff" stroke="#000" stroke-width=".9" stroke-linejoin="miter"/></svg>
<div style="left:463px;top:43px;width:100px;height:22px;background:#efebef;box-shadow:inset 1px 1px 0 #808080,inset -1px -1px 0 #fff,inset 2px 2px 0 #404040,inset -2px -2px 0 #d4d0c8"></div>
<span class="t s" style="left:468.5px;top:47.99px;font-size:12.3px;line-height:12.3px;">coreattrs</span>
<div class="rb" style="left:545px;top:45px;width:16px;height:18px;"><svg class="a" style="left:4px;top:7px" width="7" height="4" viewBox="0 0 7 4"><path d="M0 0h7L3.500 4z" fill="#000"/></svg></div>
<div style="left:0px;top:68px;width:1024px;height:1px;background:#808080"></div>
<div style="left:0px;top:69px;width:1024px;height:1px;background:#fff"></div>
<div class="rb1" style="left:2px;top:73px;width:11px;height:11px;"><svg class="a" style="left:2px;top:3px" width="7" height="6" viewBox="0 0 7 6"><path d="M0 0h2l1.500 1.500L5 0h2L4.500 3 7 6H5L3.500 4.500 2 6H0l2.500-3z" fill="#000"/></svg></div>
<div style="left:4px;top:87px;width:3px;height:3px;background:#fff;box-shadow:1px 1px 0 #808080"></div>
<div style="left:8px;top:87px;width:3px;height:3px;background:#fff;box-shadow:1px 1px 0 #808080"></div>
<div style="left:17px;top:75px;width:66px;height:15px;border-radius:5px 3px 0 0;box-shadow:inset 1px 1px 0 #fff,inset -1px 0 0 #404040,inset -2px 0 0 #808080"></div>
<span class="t s" style="left:22.5px;top:79.29px;font-size:11px;line-height:11px;color:#06061c;letter-spacing:.15px">index.htm*</span>
<div style="left:84px;top:75px;width:50px;height:15px;border-radius:5px 3px 0 0;box-shadow:inset 1px 1px 0 #fff,inset -1px 0 0 #404040,inset -2px 0 0 #808080"></div>
<span class="t s" style="left:89.5px;top:79.29px;font-size:11px;line-height:11px;color:#06061c;letter-spacing:.15px">test.xml</span>
<div style="left:134px;top:75px;width:52px;height:15px;border-radius:5px 3px 0 0;box-shadow:inset 1px 1px 0 #fff"></div>
<span class="t s" style="left:140px;top:79.29px;font-size:11px;line-height:11px;color:#06061c;letter-spacing:.15px">test.css</span>
<div style="left:182px;top:73px;width:51px;height:18px;background:#d4d0c8;border-radius:4px 3px 0 0;box-shadow:inset 1px 1px 0 #fff,inset -1px 0 0 #101010,inset -2px 0 0 #606060;border-top-left-radius:5px"></div>
<span class="t s" style="left:189.6px;top:77.29px;font-size:11px;line-height:11px;color:#06061c;letter-spacing:.15px">base.js</span>
<div style="left:232px;top:89px;width:788px;height:1px;background:#6a6a6a"></div>
<div style="left:232px;top:90px;width:788px;height:1px;background:#1a1a1a"></div>
<div style="left:0px;top:95px;width:1024px;height:2px;background:#fff"></div>
<div style="left:0px;top:98px;width:1024px;height:622px;background:#d4d0c8"></div>
<div style="left:0px;top:98px;width:1px;height:621px;background:#808080"></div>
<div style="left:1px;top:99px;width:1022px;height:1px;background:#000"></div>
<div style="left:1px;top:99px;width:1px;height:620px;background:#202020"></div>
<div style="left:1023px;top:97px;width:1px;height:623px;background:#fff"></div>
<div style="left:0px;top:719px;width:1024px;height:1px;background:#fff"></div>
<div style="left:2px;top:100px;width:1004px;height:14px;background:#f0f0f0;box-shadow:inset 1px 1px 0 #fff,inset 0 -1px 0 #fff"></div>
<div style="left:2px;top:114px;width:1004px;height:1px;background:#000"></div>
<svg class="a" style="left:0;top:0" width="1006" height="115" shape-rendering="crispEdges"><path d="M58 110v4M72 110v4M86 110v4M100 110v4M114 110v4M128 108v6M142 110v4M156 110v4M170 110v4M184 110v4M198 110v4M212 110v4M226 110v4M240 110v4M254 110v4M268 108v6M282 110v4M296 110v4M310 110v4M324 110v4M338 110v4M352 110v4M366 110v4M380 110v4M394 110v4M408 108v6M422 110v4M436 110v4M450 110v4M464 110v4M478 110v4M492 110v4M506 110v4M520 110v4M534 110v4M548 108v6M562 110v4M576 110v4M590 110v4M604 110v4M618 110v4M632 110v4M646 110v4M660 110v4M674 110v4M688 108v6M702 110v4M716 110v4M730 110v4M744 110v4M758 110v4M772 110v4M786 110v4M800 110v4M814 110v4M828 108v6M842 110v4M856 110v4M870 110v4M884 110v4M898 110v4M912 110v4M926 110v4M940 110v4M954 110v4M968 108v6M982 110v4M996 110v4" stroke="#000" stroke-width="1" transform="translate(.5 0)" fill="none"/><path d="M70 101.500h5M72.500 102v7" stroke="#000" fill="none"/></svg>
<span class="t s" style="left:55.3px;top:101.24px;font-size:12px;line-height:12px;">0</span>
<span class="t m" style="left:190.5px;top:102.05px;font-size:12.2px;line-height:12.2px;">1</span>
<span class="t s" style="left:199.9px;top:101.24px;font-size:12px;line-height:12px;">0</span>
<span class="t m" style="left:330.5px;top:102.05px;font-size:12.2px;line-height:12.2px;">2</span>
<span class="t s" style="left:339.9px;top:101.24px;font-size:12px;line-height:12px;">0</span>
<span class="t m" style="left:470.5px;top:102.05px;font-size:12.2px;line-height:12.2px;">3</span>
<span class="t s" style="left:479.9px;top:101.24px;font-size:12px;line-height:12px;">0</span>
<span class="t m" style="left:610.5px;top:102.05px;font-size:12.2px;line-height:12.2px;">4</span>
<span class="t s" style="left:619.9px;top:101.24px;font-size:12px;line-height:12px;">0</span>
<span class="t m" style="left:750.5px;top:102.05px;font-size:12.2px;line-height:12.2px;">5</span>
<span class="t s" style="left:759.9px;top:101.24px;font-size:12px;line-height:12px;">0</span>
<span class="t m" style="left:890.5px;top:102.05px;font-size:12.2px;line-height:12.2px;">6</span>
<span class="t s" style="left:899.9px;top:101.24px;font-size:12px;line-height:12px;">0</span>
<div style="left:2px;top:115px;width:36px;height:587px;background:#efefef;border-left:1px solid #fff"></div>
<div style="left:38px;top:115px;width:16px;height:587px;background:#f7f7f7"></div>
<div style="left:54px;top:115px;width:952px;height:587px;background:#efebef"></div>
<div style="left:58px;top:619px;width:948px;height:24px;background:#80ffff"></div>
<div style="left:72px;top:619px;width:2px;height:24px;background:#800000"></div>
<div class="ln" style="top:115.25px">43</div>
<div class="ln" style="top:139.25px">44</div>
<div class="fb" style="top:143px"><i></i></div>
<div class="ln" style="top:163.25px">45</div>
<div class="ln" style="top:187.25px">46</div>
<div class="ln" style="top:211.25px">47</div>
<div class="fb" style="top:215px"><i></i></div>
<div class="ln" style="top:235.25px">48</div>
<div class="ln" style="top:259.25px">49</div>
<div class="ln" style="top:283.25px">50</div>
<div class="ln" style="top:307.25px">51</div>
<div class="ln" style="top:331.25px">52</div>
<div class="fb" style="top:335px"><i></i></div>
<div class="ln" style="top:355.25px">53</div>
<div class="fb" style="top:359px"><i></i></div>
<div class="ln" style="top:379.25px">54</div>
<div class="ln" style="top:403.25px">55</div>
<div class="ln" style="top:427.25px">56</div>
<div class="ln" style="top:451.25px">57</div>
<div class="fb" style="top:455px"><i></i></div>
<div class="ln" style="top:475.25px">58</div>
<div class="ln" style="top:499.25px">59</div>
<div class="ln" style="top:523.25px">60</div>
<div class="fb" style="top:527px"><i></i></div>
<div class="ln" style="top:547.25px">61</div>
<div class="ln" style="top:571.25px">62</div>
<div class="ln" style="top:595.25px">63</div>
<div class="ln" style="top:619.25px">64</div>
<div class="ln" style="top:643.25px">65</div>
<div class="ln" style="top:667.25px">66</div>
<div id="code">
<div class="l" style="top:25.90px">  <span class="K">if</span> <span class="B">(</span><span class="G">/</span><span class="O">get</span><span class="G">/</span>i.<span class="O">test</span><span class="B">(</span>args.<span class="O">method</span><span class="B">))</span> <span class="B">{</span></div>
<div class="l" style="top:49.90px">    args.url<span class="G">+=</span><span class="S">"?"</span><span class="G">+</span><span class="O">data</span><span class="B">;</span></div>
<div class="l" style="top:73.90px">  <span class="B">}</span></div>
<div class="l" style="top:97.90px">  <span class="K">if</span> <span class="B">(</span><span class="G">!</span>args.cache<span class="B">)</span> <span class="B">{</span></div>
<div class="l" style="top:121.90px">    <span class="K">if</span> <span class="B">(</span>args.url.<span class="O">indexOf</span><span class="B">(</span><span class="S">"?"</span><span class="B">)</span>&lt;0<span class="B">)</span> args.url<span class="G">+=</span><span class="S">"?"</span><span class="B">;</span></div>
<div class="l" style="top:145.90px">    args.url<span class="G">+=</span><span class="S">"&amp;"</span><span class="G">+</span><span class="B">(</span><span class="G">+new</span> <span class="R">Date</span><span class="B">())</span><span class="B">;</span></div>
<div class="l" style="top:169.90px">  <span class="B">}</span></div>
<div class="l" style="top:193.90px">  xhr.<span class="O">open</span><span class="B">(</span>args.<span class="O">method</span><span class="B">,</span>args.url<span class="B">,</span><span class="K">true</span><span class="B">);</span></div>
<div class="l" style="top:217.90px">  xhr.onreadystatechange<span class="G">=</span><span class="K">function</span> <span class="B">()</span> <span class="B">{</span></div>
<div class="l" style="top:241.90px">    <span class="K">if</span> <span class="B">(</span>xhr.<span class="O">status</span><span class="G">===</span><span class="R">200</span> <span class="G">&amp;&amp;</span> xhr.<span class="O">readyState</span><span class="G">===</span><span class="R">4</span><span class="B">)</span> <span class="B">{</span></div>
<div class="l" style="top:265.90px">      args.success<span class="B">(</span>xhr.responseText<span class="B">,</span>xhr.responseXML<span class="B">);</span></div>
<div class="l" style="top:289.90px">    <span class="B">}</span></div>
<div class="l" style="top:313.90px">  <span class="B">};</span></div>
<div class="l" style="top:337.90px">  <span class="K">if</span> <span class="B">(</span><span class="G">/</span>post<span class="G">/</span>i.<span class="O">test</span><span class="B">(</span>args.<span class="O">method</span><span class="B">))</span> <span class="B">{</span></div>
<div class="l" style="top:361.90px">    xhr.setRequestHeader<span class="B">(</span><span class="S">"Content-Type"</span><span class="B">,</span><span class="S">"application/x-www-form-urlencoded"</span><span class="B">);</span></div>
<div class="l" style="top:385.90px">    xhr.send<span class="B">(</span><span class="O">data</span><span class="B">);</span></div>
<div class="l" style="top:409.90px">  <span class="B">}</span> <span class="K">else</span> <span class="B">{</span></div>
<div class="l" style="top:433.90px">    xhr.send<span class="B">();</span></div>
<div class="l" style="top:457.90px">  <span class="B">}</span></div>
<div class="l" style="top:505.90px"><span class="B">}</span></div>
</div>
<svg class="a" style="left:205px;top:351px" width="7" height="16" shape-rendering="crispEdges"><path d="M0 .5h3M4 .5h3M3.500 1v14M0 15.500h3M4 15.500h3" stroke="#000" fill="none"/></svg>
<div class="chk" style="left:1006px;top:100px;width:16px;height:602px;"></div>
<div class="sb" style="left:1006px;top:100px;width:16px;height:7px;"></div>
<div class="sb" style="left:1006px;top:107px;width:16px;height:16px;"><svg class="a" style="left:4px;top:6px" width="7" height="4"><path d="M0 4h7L3.500 0z" fill="#000"/></svg></div>
<div class="sb" style="left:1006px;top:166px;width:16px;height:24px;"></div>
<div class="sb" style="left:1006px;top:686px;width:16px;height:16px;"><svg class="a" style="left:4px;top:6px" width="7" height="4"><path d="M0 0h7L3.500 4z" fill="#000"/></svg></div>
<div class="chk" style="left:2px;top:702px;width:1004px;height:16px;"></div>
<div class="sb" style="left:2px;top:702px;width:16px;height:16px;"><svg class="a" style="left:5px;top:4px" width="4" height="7"><path d="M4 0v7L0 3.500z" fill="#000"/></svg></div>
<div class="sb" style="left:18px;top:702px;width:223px;height:16px;"></div>
<div class="sb" style="left:990px;top:702px;width:16px;height:16px;"><svg class="a" style="left:6px;top:4px" width="4" height="7"><path d="M0 0v7L4 3.500z" fill="#000"/></svg></div>
<div style="left:1006px;top:702px;width:16px;height:16px;background:#d4d0c8"></div>
<div style="left:1px;top:718px;width:1022px;height:1px;background:#e6e4df"></div>
<div style="left:0px;top:720px;width:1024px;height:20px;background:#d4d0c8"></div>
<div class="sk" style="left:413px;top:722px;width:145px;height:17px;"></div>
<div class="sk" style="left:561px;top:722px;width:55px;height:17px;"></div>
<div class="sk" style="left:619px;top:722px;width:65px;height:17px;"></div>
<div class="sk" style="left:687px;top:722px;width:151px;height:17px;"></div>
<div class="sk" style="left:840px;top:722px;width:125px;height:17px;"></div>
<div class="sk" style="left:968px;top:722px;width:29px;height:17px;"></div>
<div class="sk" style="left:1000px;top:722px;width:23px;height:17px;"></div>
<svg class="a" role="img" aria-label="行" style="left:415px;top:722px" width="14" height="16" shape-rendering="crispEdges"><path fill="#000" d="M2 2h1v1h-1zM5 2h5v1h-5zM1 3h1v1h-1zM0 4h1v1h-1zM3 5h1v1h-1zM2 6h1v1h-1zM4 6h7v1h-7zM1 7h2v1h-2zM8 7h1v1h-1zM0 8h1v1h-1zM2 8h1v1h-1zM8 8h1v1h-1zM2 9h1v1h-1zM8 9h1v1h-1zM2 10h1v1h-1zM8 10h1v1h-1zM2 11h1v1h-1zM8 11h1v1h-1zM2 12h1v1h-1zM6 12h3v1h-3z"/></svg>
<span class="t m" style="left:427px;top:726.06px;font-size:11.66px;line-height:11.66px;color:#000;letter-spacing:-1px;"> 64, </span>
<svg class="a" role="img" aria-label="列" style="left:457px;top:722px" width="14" height="16" shape-rendering="crispEdges"><path fill="#000" d="M1 2h6v1h-6zM10 2h1v1h-1zM3 3h1v1h-1zM10 3h1v1h-1zM3 4h1v1h-1zM7 4h1v1h-1zM10 4h1v1h-1zM2 5h4v1h-4zM7 5h1v1h-1zM10 5h1v1h-1zM2 6h1v1h-1zM5 6h1v1h-1zM7 6h1v1h-1zM10 6h1v1h-1zM1 7h2v1h-2zM5 7h1v1h-1zM7 7h1v1h-1zM10 7h1v1h-1zM0 8h1v1h-1zM3 8h2v1h-2zM7 8h1v1h-1zM10 8h1v1h-1zM4 9h1v1h-1zM7 9h1v1h-1zM10 9h1v1h-1zM3 10h1v1h-1zM10 10h1v1h-1zM2 11h1v1h-1zM10 11h1v1h-1zM0 12h2v1h-2zM8 12h3v1h-3z"/></svg>
<span class="t m" style="left:469px;top:726.06px;font-size:11.66px;line-height:11.66px;color:#000;letter-spacing:-1px;">2, C0</span>
<span class="t m" style="left:563px;top:726.06px;font-size:11.66px;line-height:11.66px;color:#000;letter-spacing:-1px;">DOS</span>
<span class="t m" style="left:621px;top:726.06px;font-size:11.66px;line-height:11.66px;color:#000;letter-spacing:-1px;">JavaScript</span>
<svg class="a" role="img" aria-label="修" style="left:689px;top:722px" width="14" height="16" shape-rendering="crispEdges"><path fill="#000" d="M3 2h1v1h-1zM6 2h1v1h-1zM3 3h1v1h-1zM6 3h5v1h-5zM2 4h1v1h-1zM4 4h2v1h-2zM7 4h1v1h-1zM9 4h1v1h-1zM2 5h1v1h-1zM4 5h1v1h-1zM8 5h1v1h-1zM1 6h2v1h-2zM4 6h1v1h-1zM6 6h2v1h-2zM9 6h1v1h-1zM0 7h1v1h-1zM2 7h1v1h-1zM4 7h2v1h-2zM8 7h1v1h-1zM10 7h1v1h-1zM2 8h1v1h-1zM4 8h1v1h-1zM7 8h1v1h-1zM9 8h1v1h-1zM2 9h1v1h-1zM4 9h1v1h-1zM6 9h1v1h-1zM8 9h1v1h-1zM2 10h1v1h-1zM4 10h1v1h-1zM7 10h1v1h-1zM10 10h1v1h-1zM2 11h1v1h-1zM8 11h2v1h-2zM2 12h1v1h-1zM5 12h3v1h-3z"/></svg>
<svg class="a" role="img" aria-label="改" style="left:701px;top:722px" width="14" height="16" shape-rendering="crispEdges"><path fill="#000" d="M7 2h1v1h-1zM0 3h5v1h-5zM7 3h1v1h-1zM4 4h1v1h-1zM6 4h5v1h-5zM4 5h2v1h-2zM9 5h1v1h-1zM1 6h4v1h-4zM6 6h1v1h-1zM9 6h1v1h-1zM1 7h1v1h-1zM6 7h1v1h-1zM9 7h1v1h-1zM1 8h1v1h-1zM6 8h1v1h-1zM9 8h1v1h-1zM1 9h1v1h-1zM7 9h2v1h-2zM1 10h1v1h-1zM3 10h1v1h-1zM7 10h2v1h-2zM1 11h2v1h-2zM6 11h1v1h-1zM9 11h1v1h-1zM1 12h1v1h-1zM4 12h2v1h-2zM10 12h1v1h-1z"/></svg>
<svg class="a" role="img" aria-label="：" style="left:710px;top:722px" width="14" height="16" shape-rendering="crispEdges"><path fill="#000" d="M6 4h2v1h-2zM6 5h2v1h-2zM6 9h2v1h-2zM6 10h2v1h-2z"/></svg>
<span class="t m" style="left:725px;top:726.06px;font-size:11.66px;line-height:11.66px;color:#000;letter-spacing:-1px;">2010-5-19 16:40:00</span>
<svg class="a" role="img" aria-label="文" style="left:842px;top:722px" width="14" height="16" shape-rendering="crispEdges"><path fill="#000" d="M4 2h1v1h-1zM5 3h1v1h-1zM0 4h11v1h-11zM3 5h1v1h-1zM7 5h1v1h-1zM3 6h1v1h-1zM7 6h1v1h-1zM3 7h1v1h-1zM7 7h1v1h-1zM4 8h1v1h-1zM6 8h1v1h-1zM4 9h1v1h-1zM6 9h1v1h-1zM5 10h1v1h-1zM3 11h2v1h-2zM6 11h2v1h-2zM0 12h3v1h-3zM8 12h3v1h-3z"/></svg>
<svg class="a" role="img" aria-label="件" style="left:854px;top:722px" width="14" height="16" shape-rendering="crispEdges"><path fill="#000" d="M3 2h1v1h-1zM7 2h1v1h-1zM3 3h1v1h-1zM5 3h1v1h-1zM7 3h1v1h-1zM2 4h1v1h-1zM5 4h1v1h-1zM7 4h1v1h-1zM2 5h1v1h-1zM4 5h6v1h-6zM1 6h3v1h-3zM7 6h1v1h-1zM0 7h1v1h-1zM2 7h1v1h-1zM7 7h1v1h-1zM2 8h1v1h-1zM4 8h7v1h-7zM2 9h1v1h-1zM7 9h1v1h-1zM2 10h1v1h-1zM7 10h1v1h-1zM2 11h1v1h-1zM7 11h1v1h-1zM2 12h1v1h-1zM7 12h1v1h-1z"/></svg>
<svg class="a" role="img" aria-label="大" style="left:866px;top:722px" width="14" height="16" shape-rendering="crispEdges"><path fill="#000" d="M5 2h1v1h-1zM5 3h1v1h-1zM5 4h1v1h-1zM0 5h11v1h-11zM5 6h1v1h-1zM5 7h1v1h-1zM4 8h1v1h-1zM6 8h1v1h-1zM4 9h1v1h-1zM6 9h1v1h-1zM3 10h1v1h-1zM7 10h1v1h-1zM2 11h1v1h-1zM8 11h1v1h-1zM0 12h2v1h-2zM9 12h2v1h-2z"/></svg>
<svg class="a" role="img" aria-label="小" style="left:878px;top:722px" width="14" height="16" shape-rendering="crispEdges"><path fill="#000" d="M5 2h1v1h-1zM5 3h1v1h-1zM5 4h1v1h-1zM2 5h1v1h-1zM5 5h1v1h-1zM8 5h1v1h-1zM2 6h1v1h-1zM5 6h1v1h-1zM9 6h1v1h-1zM1 7h1v1h-1zM5 7h1v1h-1zM9 7h1v1h-1zM1 8h1v1h-1zM5 8h1v1h-1zM10 8h1v1h-1zM0 9h1v1h-1zM5 9h1v1h-1zM10 9h1v1h-1zM5 10h1v1h-1zM3 11h1v1h-1zM5 11h1v1h-1zM4 12h1v1h-1z"/></svg>
<svg class="a" role="img" aria-label="：" style="left:887px;top:722px" width="14" height="16" shape-rendering="crispEdges"><path fill="#000" d="M6 4h2v1h-2zM6 5h2v1h-2zM6 9h2v1h-2zM6 10h2v1h-2z"/></svg>
<span class="t m" style="left:902px;top:726.06px;font-size:11.66px;line-height:11.66px;color:#000;letter-spacing:-1px;">14257</span>
<svg class="a" role="img" aria-label="插" style="left:970px;top:722px" width="14" height="16" shape-rendering="crispEdges"><path fill="#000" d="M2 2h1v1h-1zM8 2h2v1h-2zM2 3h1v1h-1zM5 3h3v1h-3zM0 4h4v1h-4zM7 4h1v1h-1zM2 5h1v1h-1zM4 5h7v1h-7zM2 6h1v1h-1zM7 6h1v1h-1zM2 7h2v1h-2zM5 7h1v1h-1zM7 7h1v1h-1zM9 7h2v1h-2zM1 8h2v1h-2zM4 8h1v1h-1zM7 8h1v1h-1zM10 8h1v1h-1zM0 9h1v1h-1zM2 9h1v1h-1zM4 9h2v1h-2zM7 9h1v1h-1zM9 9h2v1h-2zM2 10h1v1h-1zM4 10h1v1h-1zM7 10h1v1h-1zM10 10h1v1h-1zM2 11h1v1h-1zM4 11h1v1h-1zM7 11h1v1h-1zM10 11h1v1h-1zM0 12h3v1h-3zM4 12h7v1h-7z"/></svg>
<svg class="a" role="img" aria-label="入" style="left:982px;top:722px" width="14" height="16" shape-rendering="crispEdges"><path fill="#000" d="M3 2h2v1h-2zM5 3h1v1h-1zM5 4h1v1h-1zM5 5h1v1h-1zM4 6h1v1h-1zM6 6h1v1h-1zM4 7h1v1h-1zM6 7h1v1h-1zM3 8h1v1h-1zM7 8h1v1h-1zM3 9h1v1h-1zM7 9h1v1h-1zM2 10h1v1h-1zM8 10h1v1h-1zM1 11h1v1h-1zM9 11h1v1h-1zM0 12h1v1h-1zM10 12h1v1h-1z"/></svg>
<div style="left:0px;top:740px;width:1024px;height:28px;background:#d4d0c8"></div>
<div style="left:0px;top:740px;width:1024px;height:1px;background:#fff"></div>
<div class="rb" style="left:2px;top:743px;width:47px;height:22px;"></div>
<svg class="a" style="left:5px;top:746px" width="16" height="16" viewBox="0 0 16 16"><path d="M1 3c2-1.500 4-1.500 6 0l-1 5c-2-1.500-4-1.500-6 0z" fill="#e8502a"/><path d="M8 3.500c2 1.500 4 1.500 6 0l-1 5c-2 1.500-4 1.500-6 0z" fill="#58b030"/><path d="M0 9.500c2-1.500 4-1.500 6 0l-1 5c-2-1.500-4-1.500-6 0z" fill="#2a6ae0"/><path d="M7 10c2 1.500 4 1.500 6 0l-1 5c-2 1.500-4 1.500-6 0z" fill="#f0c020"/></svg>
<svg class="a" role="img" aria-label="开" style="left:22px;top:746px" width="14" height="16" shape-rendering="crispEdges"><path fill="#000" d="M1 2h10v1h-10zM3 3h2v1h-2zM7 3h2v1h-2zM3 4h2v1h-2zM7 4h2v1h-2zM3 5h2v1h-2zM7 5h2v1h-2zM3 6h2v1h-2zM7 6h2v1h-2zM0 7h12v1h-12zM3 8h2v1h-2zM7 8h2v1h-2zM2 9h2v1h-2zM7 9h2v1h-2zM2 10h2v1h-2zM7 10h2v1h-2zM1 11h2v1h-2zM7 11h2v1h-2zM0 12h2v1h-2zM7 12h2v1h-2z"/></svg>
<svg class="a" role="img" aria-label="始" style="left:34px;top:746px" width="14" height="16" shape-rendering="crispEdges"><path fill="#000" d="M2 2h2v1h-2zM7 2h2v1h-2zM2 3h2v1h-2zM7 3h2v1h-2zM0 4h6v1h-6zM6 4h2v1h-2zM9 4h2v1h-2zM2 5h2v1h-2zM4 5h2v1h-2zM6 5h2v1h-2zM10 5h2v1h-2zM2 6h2v1h-2zM4 6h8v1h-8zM1 7h2v1h-2zM4 7h2v1h-2zM1 8h2v1h-2zM3 8h2v1h-2zM6 8h6v1h-6zM2 9h3v1h-3zM6 9h2v1h-2zM10 9h2v1h-2zM2 10h2v1h-2zM4 10h2v1h-2zM6 10h2v1h-2zM10 10h2v1h-2zM1 11h2v1h-2zM4 11h2v1h-2zM6 11h6v1h-6zM0 12h2v1h-2zM6 12h2v1h-2zM10 12h2v1h-2z"/></svg>
<svg class="a" style="left:58px;top:746.5px" width="16" height="16" viewBox="0 0 16 16"><path transform="translate(-1.300 -1.200) scale(1.140)" d="M8.300 2.200c3.400 0 5.700 2.500 5.700 6.300v.9H5.700c.2 1.700 1.300 2.700 2.900 2.700 1.200 0 2.100-.5 2.600-1.400h2.600c-.8 2.300-2.700 3.600-5.300 3.600-3.400 0-5.700-2.400-5.700-6s2.300-6.100 5.500-6.100zm0 2.200c-1.400 0-2.400 1-2.600 2.600h5.200c-.2-1.600-1.100-2.600-2.600-2.600z" fill="url(#gie)" stroke="#0c4fb0" stroke-width=".5"/><path d="M2.200 10.500C.3 13.500.500 15.300 2.500 15c2-.3 5-2.300 8-5.300C13.500 6.500 15.500 3 15.300 1.600 15 .2 13 .6 10.500 2.200" fill="none" stroke="#f0b224" stroke-width="1.300" stroke-linecap="round"/></svg>
<svg class="a" style="left:80px;top:746.5px" width="16" height="16" viewBox="0 0 16 16"><rect x="0" y="0" width="16" height="16" fill="#1a6ad8"/><path d="M1.500 0v16M14.500 0v16" stroke="#fff" stroke-width="1.500" stroke-dasharray="2 2"/><path d="M6 3c4 0 5 4 4 7-1 2-3 3-5 2 2 0 3-2 3-4S7 4.500 6 3z" fill="#fff"/></svg>
<svg class="a" style="left:103px;top:746.5px" width="16" height="16" viewBox="0 0 16 16"><rect x="1" y="2" width="13" height="12" rx="2" fill="#3a8ae8" stroke="#1a4ab0"/><rect x="3.500" y="4.500" width="8" height="7" fill="#fff"/><path d="M5 10l5-4M10 6v3M10 6H7" stroke="#1a4ab0" stroke-width="1.200" fill="none"/><circle cx="14" cy="4" r="1.500" fill="#e83a2a"/></svg>
<div class="rb" style="left:127px;top:743px;width:101px;height:22px;"></div>
<svg class="a" style="left:131px;top:746px" width="16" height="16" viewBox="0 0 16 16"><path d="M.600 12V3q0-1.400 1.400-1.400h3q.9 0 1.300.8l.5.900h4.700q1.400 0 1.400 1.400v1.500" fill="#fff3a6" stroke="#c0901c" stroke-width="1"/><path d="M.800 12.500l1.800-5.800q.3-.9 1.300-.9h10.600q1.100 0 .8 1l-1.600 5.200q-.3.900-1.300.9H1.500q-.9 0-.7-.4z" fill="url(#gfold3)" stroke="#b8860f" stroke-width="1"/></svg>
<svg class="a" role="img" aria-label="普" style="left:151px;top:746px" width="14" height="16" shape-rendering="crispEdges"><path fill="#000" d="M3 2h1v1h-1zM7 2h1v1h-1zM1 3h9v1h-9zM1 4h1v1h-1zM4 4h1v1h-1zM6 4h1v1h-1zM9 4h1v1h-1zM2 5h1v1h-1zM4 5h1v1h-1zM6 5h1v1h-1zM8 5h1v1h-1zM0 6h11v1h-11zM2 8h7v1h-7zM2 9h1v1h-1zM8 9h1v1h-1zM2 10h7v1h-7zM2 11h1v1h-1zM8 11h1v1h-1zM2 12h7v1h-7z"/></svg>
<svg class="a" role="img" aria-label="通" style="left:163px;top:746px" width="14" height="16" shape-rendering="crispEdges"><path fill="#000" d="M1 2h1v1h-1zM4 2h6v1h-6zM2 3h1v1h-1zM6 3h1v1h-1zM8 3h1v1h-1zM2 4h1v1h-1zM4 4h7v1h-7zM4 5h1v1h-1zM7 5h1v1h-1zM10 5h1v1h-1zM0 6h3v1h-3zM4 6h7v1h-7zM2 7h1v1h-1zM4 7h1v1h-1zM7 7h1v1h-1zM10 7h1v1h-1zM2 8h1v1h-1zM4 8h7v1h-7zM2 9h1v1h-1zM4 9h1v1h-1zM7 9h1v1h-1zM10 9h1v1h-1zM2 10h1v1h-1zM4 10h1v1h-1zM7 10h1v1h-1zM9 10h2v1h-2zM1 11h1v1h-1zM3 11h1v1h-1zM0 12h1v1h-1zM4 12h7v1h-7z"/></svg>
<svg class="a" role="img" aria-label="版" style="left:175px;top:746px" width="14" height="16" shape-rendering="crispEdges"><path fill="#000" d="M3 2h1v1h-1zM8 2h2v1h-2zM1 3h1v1h-1zM3 3h1v1h-1zM5 3h3v1h-3zM1 4h1v1h-1zM3 4h1v1h-1zM5 4h1v1h-1zM1 5h10v1h-10zM1 6h1v1h-1zM5 6h2v1h-2zM9 6h1v1h-1zM1 7h1v1h-1zM5 7h1v1h-1zM7 7h1v1h-1zM9 7h1v1h-1zM1 8h3v1h-3zM5 8h1v1h-1zM7 8h1v1h-1zM9 8h1v1h-1zM1 9h1v1h-1zM3 9h1v1h-1zM5 9h1v1h-1zM8 9h1v1h-1zM1 10h1v1h-1zM3 10h1v1h-1zM5 10h1v1h-1zM8 10h1v1h-1zM0 11h1v1h-1zM3 11h1v1h-1zM5 11h1v1h-1zM7 11h1v1h-1zM9 11h1v1h-1zM0 12h1v1h-1zM3 12h2v1h-2zM6 12h1v1h-1zM10 12h1v1h-1z"/></svg>
<div class="rb" style="left:231px;top:743px;width:101px;height:22px;"></div>
<svg class="a" style="left:235px;top:746px" width="16" height="16" viewBox="0 0 16 16"><circle cx="8" cy="8" r="7.500" fill="#e8781a"/><circle cx="8.500" cy="7" r="4.500" fill="#3a6ad8"/><path d="M1 6c1-3 4-5 7-5-2 1-3 2-3 4 1-1 3-1 4 0-2 0-3 2-2 3.500 1 1.500 4 1 5-1 1 4-2 8-6 8S0 11 1 6z" fill="#f09020"/><path d="M2 5c1 0 2 .5 3 2L3 9z" fill="#f8d040"/></svg>
<span class="t m" style="left:255px;top:750.06px;font-size:11.66px;line-height:11.66px;color:#000;letter-spacing:-1px;">4.</span>
<svg class="a" role="img" aria-label="浏" style="left:267px;top:746px" width="14" height="16" shape-rendering="crispEdges"><path fill="#000" d="M1 2h1v1h-1zM4 2h1v1h-1zM10 2h1v1h-1zM2 3h1v1h-1zM5 3h1v1h-1zM10 3h1v1h-1zM0 4h1v1h-1zM3 4h4v1h-4zM8 4h1v1h-1zM10 4h1v1h-1zM1 5h1v1h-1zM6 5h1v1h-1zM8 5h1v1h-1zM10 5h1v1h-1zM4 6h1v1h-1zM6 6h1v1h-1zM8 6h1v1h-1zM10 6h1v1h-1zM2 7h1v1h-1zM5 7h1v1h-1zM8 7h1v1h-1zM10 7h1v1h-1zM2 8h1v1h-1zM5 8h1v1h-1zM8 8h1v1h-1zM10 8h1v1h-1zM0 9h2v1h-2zM4 9h1v1h-1zM6 9h1v1h-1zM8 9h1v1h-1zM10 9h1v1h-1zM1 10h1v1h-1zM3 10h1v1h-1zM6 10h1v1h-1zM10 10h1v1h-1zM1 11h2v1h-2zM10 11h1v1h-1zM1 12h1v1h-1zM9 12h2v1h-2z"/></svg>
<svg class="a" role="img" aria-label="览" style="left:279px;top:746px" width="14" height="16" shape-rendering="crispEdges"><path fill="#000" d="M3 2h1v1h-1zM6 2h1v1h-1zM1 3h1v1h-1zM3 3h1v1h-1zM6 3h5v1h-5zM1 4h1v1h-1zM3 4h1v1h-1zM5 4h1v1h-1zM8 4h1v1h-1zM1 5h1v1h-1zM3 5h1v1h-1zM9 5h1v1h-1zM2 6h7v1h-7zM2 7h1v1h-1zM8 7h1v1h-1zM2 8h1v1h-1zM5 8h1v1h-1zM8 8h1v1h-1zM2 9h1v1h-1zM5 9h1v1h-1zM8 9h1v1h-1zM2 10h1v1h-1zM5 10h1v1h-1zM8 10h1v1h-1zM10 10h1v1h-1zM3 11h2v1h-2zM6 11h1v1h-1zM10 11h1v1h-1zM0 12h3v1h-3zM6 12h5v1h-5z"/></svg>
<svg class="a" role="img" aria-label="器" style="left:291px;top:746px" width="14" height="16" shape-rendering="crispEdges"><path fill="#000" d="M1 2h4v1h-4zM6 2h4v1h-4zM1 3h1v1h-1zM4 3h1v1h-1zM6 3h1v1h-1zM9 3h1v1h-1zM1 4h1v1h-1zM4 4h1v1h-1zM6 4h1v1h-1zM9 4h1v1h-1zM1 5h4v1h-4zM6 5h4v1h-4zM5 6h1v1h-1zM8 6h1v1h-1zM0 7h11v1h-11zM3 8h1v1h-1zM7 8h1v1h-1zM0 9h5v1h-5zM6 9h5v1h-5zM1 10h1v1h-1zM4 10h1v1h-1zM6 10h1v1h-1zM9 10h1v1h-1zM1 11h1v1h-1zM4 11h1v1h-1zM6 11h1v1h-1zM9 11h1v1h-1zM1 12h4v1h-4zM6 12h4v1h-4z"/></svg>
<span class="t m" style="left:303px;top:750.06px;font-size:11.66px;line-height:11.66px;color:#000;letter-spacing:-1px;">...</span>
<div class="rb" style="left:335px;top:743px;width:101px;height:22px;"></div>
<svg class="a" style="left:339px;top:746px" width="16" height="16" viewBox="0 0 16 16"><path d="M.600 12V3q0-1.400 1.400-1.400h3q.9 0 1.300.8l.5.900h4.700q1.400 0 1.400 1.400v1.500" fill="#fff3a6" stroke="#c0901c" stroke-width="1"/><path d="M.800 12.500l1.800-5.800q.3-.9 1.300-.9h10.600q1.100 0 .8 1l-1.600 5.200q-.3.900-1.300.9H1.500q-.9 0-.7-.4z" fill="url(#gfold3)" stroke="#b8860f" stroke-width="1"/></svg>
<span class="t m" style="left:359px;top:750.06px;font-size:11.66px;line-height:11.66px;color:#000;letter-spacing:-1px;">4</span>
<div class="chk" style="left:440px;top:743px;width:101px;height:22px;box-shadow:inset 1px 1px 0 #404040,inset -1px -1px 0 #fff,inset 2px 2px 0 #808080,inset -2px -2px 0 #d4d0c8"></div>
<svg class="a" style="left:445px;top:747px" width="16" height="16" viewBox="0 0 16 16"><circle cx="8" cy="8" r="7.500" fill="url(#gue)"/><text x="3" y="8.500" font-family="Liberation Sans" font-style="italic" font-weight="bold" font-size="7.500" fill="#201800">U</text><text x="7" y="13.500" font-family="Liberation Sans" font-style="italic" font-weight="bold" font-size="7.500" fill="#201800">E</text></svg>
<span class="t m" style="left:465px;top:751.06px;font-size:11.66px;line-height:11.66px;color:#000;letter-spacing:-1px;-webkit-text-stroke:.4px #000;">UltraEdit...</span>
<div class="rb" style="left:545px;top:743px;width:101px;height:22px;"></div>
<svg class="a" style="left:549px;top:746px" width="16" height="16" viewBox="0 0 16 16"><path d="M.600 12V3q0-1.400 1.400-1.400h3q.9 0 1.300.8l.5.900h4.700q1.400 0 1.400 1.400v1.500" fill="#fff3a6" stroke="#c0901c" stroke-width="1"/><path d="M.800 12.500l1.800-5.800q.3-.9 1.300-.9h10.600q1.100 0 .8 1l-1.600 5.200q-.3.900-1.300.9H1.500q-.9 0-.7-.4z" fill="url(#gfold3)" stroke="#b8860f" stroke-width="1"/></svg>
<span class="t m" style="left:569px;top:750.06px;font-size:11.66px;line-height:11.66px;color:#000;letter-spacing:-1px;">4.Ajax</span>
<div class="rb" style="left:650px;top:743px;width:101px;height:22px;"></div>
<svg class="a" style="left:654px;top:746px" width="16" height="16" viewBox="0 0 16 16"><path transform="translate(-1.300 -1.200) scale(1.140)" d="M8.300 2.200c3.400 0 5.700 2.500 5.700 6.300v.9H5.700c.2 1.700 1.300 2.700 2.900 2.700 1.200 0 2.100-.5 2.600-1.400h2.600c-.8 2.300-2.700 3.600-5.300 3.600-3.400 0-5.700-2.400-5.700-6s2.300-6.100 5.500-6.100zm0 2.200c-1.400 0-2.400 1-2.600 2.600h5.200c-.2-1.600-1.100-2.600-2.600-2.600z" fill="url(#gie)" stroke="#0c4fb0" stroke-width=".5"/><path d="M2.200 10.500C.3 13.500.500 15.300 2.500 15c2-.3 5-2.300 8-5.300C13.500 6.500 15.500 3 15.300 1.600 15 .2 13 .6 10.500 2.200" fill="none" stroke="#f0b224" stroke-width="1.300" stroke-linecap="round"/></svg>
<span class="t m" style="left:674px;top:750.06px;font-size:11.66px;line-height:11.66px;color:#000;letter-spacing:-1px;">F:\CJ\JS\...</span>
<svg class="a" style="left:762px;top:748px" width="15" height="15"><path d="M5.500 5.500V2.300M5.500 2.300l1.200-1.300 1.200 1.300 1.200-1.300 1.200 1.300 1.200-1.300 1.200 1.300" fill="none" stroke="#222" stroke-width="1"/><rect x="1.500" y="5.500" width="12" height="8.500" rx="1" fill="#fff" stroke="#222" stroke-width="1.200"/><path d="M3 8h9M3 10h9" stroke="#333" stroke-width="1.100" stroke-dasharray="1 1"/><path d="M4 12h7" stroke="#333" stroke-width="1.100"/></svg>
<div style="left:781px;top:745px;width:85px;height:19px;background:linear-gradient(#2c7f2c,#1c611c);border:1px solid #e4efe4"></div>
<svg class="a" role="img" aria-label="硬盘" style="left:793px;top:748px" width="26" height="16" shape-rendering="crispEdges"><path fill="#fff" d="M5 2h6v1h-6zM0 3h4v1h-4zM7 3h1v1h-1zM2 4h1v1h-1zM5 4h6v1h-6zM2 5h1v1h-1zM5 5h1v1h-1zM7 5h1v1h-1zM10 5h1v1h-1zM1 6h3v1h-3zM5 6h6v1h-6zM0 7h2v1h-2zM3 7h1v1h-1zM5 7h1v1h-1zM7 7h1v1h-1zM10 7h1v1h-1zM1 8h1v1h-1zM3 8h1v1h-1zM5 8h6v1h-6zM1 9h1v1h-1zM3 9h2v1h-2zM7 9h1v1h-1zM1 10h3v1h-3zM5 10h1v1h-1zM7 10h1v1h-1zM1 11h1v1h-1zM3 11h1v1h-1zM6 11h2v1h-2zM4 12h2v1h-2zM8 12h3v1h-3zM17 2h1v1h-1zM15 3h6v1h-6zM15 4h1v1h-1zM17 4h1v1h-1zM20 4h1v1h-1zM15 5h1v1h-1zM18 5h1v1h-1zM20 5h1v1h-1zM13 6h10v1h-10zM15 7h1v1h-1zM17 7h1v1h-1zM20 7h1v1h-1zM14 8h1v1h-1zM18 8h1v1h-1zM20 8h1v1h-1zM14 9h8v1h-8zM14 10h1v1h-1zM16 10h1v1h-1zM19 10h1v1h-1zM21 10h1v1h-1zM14 11h1v1h-1zM16 11h1v1h-1zM19 11h1v1h-1zM21 11h1v1h-1zM12 12h11v1h-11z"/></svg>
<span class="t s" style="left:817px;top:750.00px;font-size:12.4px;line-height:12.4px;color:#f4fbf4;letter-spacing:-0.35px">:40.0</span>
<svg class="a" role="img" aria-label="℃" style="left:841px;top:748px" width="14" height="16" shape-rendering="crispEdges"><path fill="#fff" d="M1 2h2v1h-2zM6 2h3v1h-3zM0 3h1v1h-1zM3 3h1v1h-1zM5 3h1v1h-1zM9 3h1v1h-1zM1 4h2v1h-2zM5 4h1v1h-1zM4 5h1v1h-1zM4 6h1v1h-1zM4 7h1v1h-1zM4 8h1v1h-1zM5 9h1v1h-1zM5 10h1v1h-1zM9 10h1v1h-1zM6 11h3v1h-3z"/></svg>
<div class="sk" style="left:871px;top:743px;width:152px;height:24px;"></div>
<svg class="a" role="img" aria-label="«" style="left:876px;top:752px" width="9" height="7"><path d="M3.300 1L.900 3.300l2.400 2.300M7.600 1L5.200 3.300l2.400 2.300" fill="none" stroke="#000" stroke-width="1.300"/></svg>
<svg class="a" style="left:884px;top:744px" width="100" height="22" viewBox="0 0 100 22"><path d="M5 6h6v5H5zM12.500 5.500h8v6.500h-8z" fill="#f4f4f4" stroke="#111" stroke-width="1.300"/><path d="M4.500 13.500h8M13 14.500h7.500M8 11v2.500M16.500 12v2.500" stroke="#111" stroke-width="1.600"/><path d="M10.500 8h3" stroke="#111" stroke-width="2.200"/><rect x="6" y="8" width="1.200" height="1.200" fill="#e02020"/><rect x="7.500" y="9" width="1.200" height="1.200" fill="#2060e0"/><rect x="9" y="8" width="1.200" height="1.200" fill="#20a020"/><rect x="18" y="8" width="1.200" height="2.500" fill="#20a020"/><rect x="14.500" y="8" width="2" height="1.200" fill="#777"/><circle cx="31" cy="10.700" r="7.300" fill="#2b8ae6" stroke="#14233f" stroke-width="1.300"/><circle cx="31" cy="10.700" r="3.700" fill="none" stroke="#fff" stroke-width="3" stroke-dasharray="1.940 .970"/><circle cx="31" cy="10.700" r="3" fill="#fff"/><circle cx="31" cy="10.700" r="1.700" fill="#2fb4e6"/><rect x="42" y="3.800" width="7.500" height="13" fill="url(#gwin)" stroke="#555" stroke-width="1"/><path d="M43.500 6.500h4.500M43.500 8.500h4.500M43.500 10.500h4.500" stroke="#8a8a8a" stroke-width="1"/><rect x="43.300" y="14" width="1.200" height="1.200" fill="#e02020"/><circle cx="52" cy="13.500" r="4.600" fill="#fff" stroke="#111" stroke-width="1"/><path d="M50.300 10.700v5.600l4.600-2.800z" fill="#1f9a2c"/><path d="M67.200 3.400c2 1.300 4.200 1.800 6.600 1.800 0 6-2 10-6.600 12.800-4.600-2.800-6.600-6.800-6.600-12.800 2.400 0 4.600-.5 6.600-1.800z" fill="url(#gshield)" stroke="#e8f4e8" stroke-width="1"/><path d="M69.800 6l-5.300 5.200h2.800l-2 4.300 5.600-5.500h-2.900z" fill="#fff"/><circle cx="81.500" cy="8" r="4.300" fill="#8e8e8e" stroke="#4a4a4a" stroke-width="1"/><circle cx="81" cy="7.300" r="1.800" fill="#c9d3ea"/><circle cx="85" cy="10.500" r="3.800" fill="#7a7a7a" stroke="#4a4a4a" stroke-width="1"/><circle cx="88" cy="13.500" r="3.900" fill="#e8281e"/><path d="M85.700 13.500h4.600" stroke="#fff" stroke-width="1.500"/></svg>
<span class="t m" style="left:984px;top:750.06px;font-size:11.66px;line-height:11.66px;color:#000;letter-spacing:-1px;">15:09</span>
<div style="left:1024px;top:0px;width:1px;height:768px;background:#000"></div>
</body></html>
